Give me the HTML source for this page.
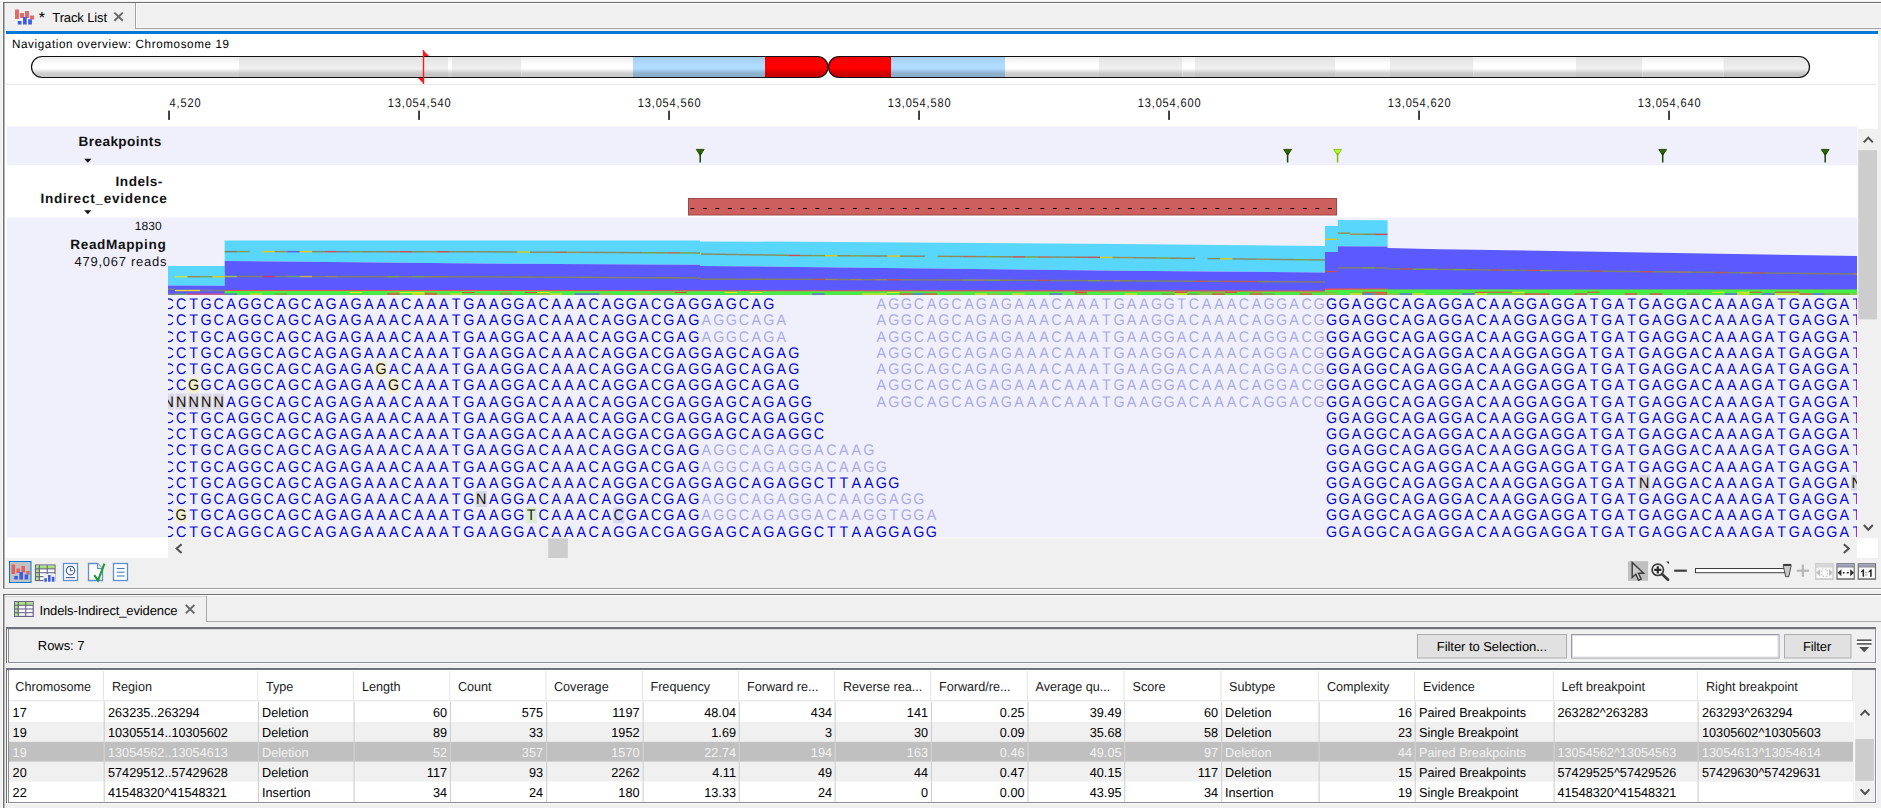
<!DOCTYPE html>
<html lang="en">
<head>
<meta charset="utf-8">
<title>Track List</title>
<style>
html,body{margin:0;padding:0;background:#f0f0f0;overflow:hidden;}
body{width:1881px;height:808px;font-family:"Liberation Sans", sans-serif;}
svg{display:block;font-family:"Liberation Sans", sans-serif;}
svg text{white-space:pre;text-rendering:geometricPrecision;}
</style>
</head>
<body>
<svg width="1881" height="808" viewBox="0 0 1881 808">
<rect x="0" y="0" width="1881" height="808" fill="#f0f0f0" />
<defs>
<linearGradient id="gW" x1="0" y1="0" x2="0" y2="1"><stop offset="0.045" stop-color="rgb(236,236,236)"/><stop offset="0.377" stop-color="rgb(255,255,255)"/><stop offset="0.573" stop-color="rgb(255,255,255)"/><stop offset="0.75" stop-color="rgb(214,214,214)"/><stop offset="0.83" stop-color="rgb(204,204,204)"/><stop offset="1" stop-color="rgb(204,204,204)"/></linearGradient>
<linearGradient id="gG" x1="0" y1="0" x2="0" y2="1"><stop offset="0.045" stop-color="rgb(226,226,226)"/><stop offset="0.377" stop-color="rgb(235,235,235)"/><stop offset="0.573" stop-color="rgb(240,240,240)"/><stop offset="0.75" stop-color="rgb(207,207,207)"/><stop offset="0.83" stop-color="rgb(196,196,196)"/><stop offset="1" stop-color="rgb(196,196,196)"/></linearGradient>
<linearGradient id="gB" x1="0" y1="0" x2="0" y2="1"><stop offset="0.045" stop-color="rgb(162,203,236)"/><stop offset="0.377" stop-color="rgb(176,220,255)"/><stop offset="0.573" stop-color="rgb(176,220,255)"/><stop offset="0.75" stop-color="rgb(147,184,214)"/><stop offset="0.83" stop-color="rgb(140,176,204)"/><stop offset="1" stop-color="rgb(140,176,204)"/></linearGradient>
<linearGradient id="gR" x1="0" y1="0" x2="0" y2="1"><stop offset="0.045" stop-color="rgb(236,0,0)"/><stop offset="0.377" stop-color="rgb(255,0,0)"/><stop offset="0.573" stop-color="rgb(255,0,0)"/><stop offset="0.75" stop-color="rgb(214,0,0)"/><stop offset="0.83" stop-color="rgb(204,0,0)"/><stop offset="1" stop-color="rgb(204,0,0)"/></linearGradient>
<clipPath id="chrL"><rect x="31.5" y="56.5" width="796.5" height="21" rx="10.5" ry="10.5"/></clipPath>
<clipPath id="chrR"><rect x="828.5" y="56.5" width="981" height="21" rx="10.5" ry="10.5"/></clipPath>
</defs>
<rect x="0" y="0" width="1881" height="1" fill="#fafafa" />
<rect x="2" y="2" width="1" height="588" fill="#fafafa" />
<rect x="3" y="2" width="1878" height="1" fill="#707070" />
<rect x="3" y="2" width="1" height="587" fill="#707070" />
<rect x="4" y="3" width="1" height="586" fill="#b8b8b8" />
<rect x="3" y="588" width="1878" height="1" fill="#a0a0a0" />
<rect x="4" y="589" width="1877" height="1" fill="#ffffff" />
<rect x="5" y="34" width="1873" height="524" fill="#ffffff" />
<rect x="136" y="3" width="1745" height="1" fill="#fbfbfb" />
<rect x="136" y="3" width="1" height="25" fill="#fbfbfb" />
<rect x="136" y="27" width="1745" height="1" fill="#f8f8f8" />
<rect x="135" y="28" width="1746" height="1" fill="#a2a2a2" />
<rect x="135" y="3" width="1" height="26" fill="#a2a2a2" />
<rect x="6" y="30" width="1872" height="1" fill="#f6f1ec" />
<rect x="6" y="31" width="1872" height="3" fill="#0078d7" />
<rect x="15" y="9.5" width="4" height="9.5" fill="#e05a5a" opacity="0.9"/>
<rect x="20" y="13" width="4" height="5" fill="#e05a5a" opacity="0.9"/>
<rect x="25" y="11" width="4" height="7" fill="#e05a5a" opacity="0.9"/>
<rect x="30" y="15.5" width="4" height="4" fill="#e05a5a" opacity="0.9"/>
<rect x="17.8" y="21" width="3.7" height="3.5" fill="#3c5ce6" />
<rect x="23" y="17" width="3.7" height="7.5" fill="#3c5ce6" />
<rect x="28.2" y="19.3" width="3.7" height="5.2" fill="#3c5ce6" />
<text x="38.8" y="23" font-size="16" fill="#000" >*</text>
<text x="52.3" y="21.5" font-size="13" fill="#000" textLength="54.7" lengthAdjust="spacing" >Track List</text>
<path d="M114.4 12.6 L122.8 20.8 M122.8 12.6 L114.4 20.8" stroke="#6a6a6a" stroke-width="2" fill="none"/>
<text transform="translate(12,47.9) scale(0.97,1)" x="0" y="0" font-size="12" fill="#000" textLength="223.71" lengthAdjust="spacing" >Navigation overview: Chromosome 19</text>
<g clip-path="url(#chrL)">
<rect x="31" y="56" width="208" height="22" fill="url(#gW)" />
<rect x="239" y="56" width="209" height="22" fill="url(#gG)" />
<rect x="448" y="56" width="4" height="22" fill="url(#gW)" />
<rect x="452" y="56" width="69.5" height="22" fill="url(#gG)" />
<rect x="521.5" y="56" width="111.5" height="22" fill="url(#gW)" />
<rect x="633" y="56" width="132" height="22" fill="url(#gB)" />
<rect x="765" y="56" width="63" height="22" fill="url(#gR)" />
</g>
<g clip-path="url(#chrR)">
<rect x="828" y="56" width="63" height="22" fill="url(#gR)" />
<rect x="891" y="56" width="114" height="22" fill="url(#gB)" />
<rect x="1005" y="56" width="94" height="22" fill="url(#gW)" />
<rect x="1099" y="56" width="83.5" height="22" fill="url(#gG)" />
<rect x="1182.5" y="56" width="12.5" height="22" fill="url(#gW)" />
<rect x="1195" y="56" width="140" height="22" fill="url(#gG)" />
<rect x="1335" y="56" width="55" height="22" fill="url(#gW)" />
<rect x="1390" y="56" width="83.5" height="22" fill="url(#gG)" />
<rect x="1473.5" y="56" width="102.5" height="22" fill="url(#gW)" />
<rect x="1576" y="56" width="66.5" height="22" fill="url(#gG)" />
<rect x="1642.5" y="56" width="81.0" height="22" fill="url(#gW)" />
<rect x="1723.5" y="56" width="86.5" height="22" fill="url(#gG)" />
</g>
<rect x="31.5" y="56.5" width="796.5" height="21" rx="10.5" ry="10.5" fill="none" stroke="#111" stroke-width="1.2"/>
<rect x="828.5" y="56.5" width="981" height="21" rx="10.5" ry="10.5" fill="none" stroke="#111" stroke-width="1.2"/>
<path d="M423.5 50 L423.5 84" stroke="#ff1a1a" stroke-width="1.4" fill="none"/>
<path d="M423 50 L429 56 L423 56 Z" fill="#ff1a1a"/>
<path d="M424 78 L424 84 L418 78 Z" fill="#ff1a1a"/>
<rect x="6" y="84" width="1870" height="1" fill="#e6e6e6" />
<rect x="168.1" y="110.6" width="1.9" height="9.3" fill="#3a3a3a" />
<text transform="translate(169.5,107) scale(0.88,1)" x="0" y="0" font-size="12.5" fill="#111" textLength="35.45" lengthAdjust="spacing" >4,520</text>
<rect x="418.1" y="110.6" width="1.9" height="9.3" fill="#3a3a3a" />
<text transform="translate(387.8,107) scale(0.88,1)" x="0" y="0" font-size="12.5" fill="#111" textLength="71.25" lengthAdjust="spacing" >13,054,540</text>
<rect x="668.1" y="110.6" width="1.9" height="9.3" fill="#3a3a3a" />
<text transform="translate(637.8,107) scale(0.88,1)" x="0" y="0" font-size="12.5" fill="#111" textLength="71.25" lengthAdjust="spacing" >13,054,560</text>
<rect x="918.1" y="110.6" width="1.9" height="9.3" fill="#3a3a3a" />
<text transform="translate(887.8,107) scale(0.88,1)" x="0" y="0" font-size="12.5" fill="#111" textLength="71.25" lengthAdjust="spacing" >13,054,580</text>
<rect x="1168.1" y="110.6" width="1.9" height="9.3" fill="#3a3a3a" />
<text transform="translate(1137.8,107) scale(0.88,1)" x="0" y="0" font-size="12.5" fill="#111" textLength="71.25" lengthAdjust="spacing" >13,054,600</text>
<rect x="1418.1" y="110.6" width="1.9" height="9.3" fill="#3a3a3a" />
<text transform="translate(1387.8,107) scale(0.88,1)" x="0" y="0" font-size="12.5" fill="#111" textLength="71.25" lengthAdjust="spacing" >13,054,620</text>
<rect x="1668.1" y="110.6" width="1.9" height="9.3" fill="#3a3a3a" />
<text transform="translate(1637.8,107) scale(0.88,1)" x="0" y="0" font-size="12.5" fill="#111" textLength="71.25" lengthAdjust="spacing" >13,054,640</text>
<rect x="7" y="126.5" width="1850" height="38.5" fill="#f0f0fc" />
<rect x="7" y="217.5" width="1850" height="320" fill="#f0f0fc" />
<text x="78.5" y="146" font-size="13.6" fill="#111" font-weight="bold" textLength="82.7" lengthAdjust="spacing" >Breakpoints</text>
<path d="M84.2 158.8 L91.4 158.8 L87.8 162.8 Z" fill="#111"/>
<text x="115.6" y="185.7" font-size="13.6" fill="#111" font-weight="bold" textLength="46.7" lengthAdjust="spacing" >Indels-</text>
<text x="40.6" y="202.7" font-size="13.6" fill="#111" font-weight="bold" textLength="126.2" lengthAdjust="spacing" >Indirect_evidence</text>
<path d="M84.2 210.2 L91.4 210.2 L87.8 214.2 Z" fill="#111"/>
<text x="134.7" y="229.8" font-size="12" fill="#111" textLength="27" lengthAdjust="spacing" >1830</text>
<text x="70.3" y="249" font-size="13.6" fill="#111" font-weight="bold" textLength="95.4" lengthAdjust="spacing" >ReadMapping</text>
<text x="74.6" y="265.7" font-size="13" fill="#111" textLength="91.9" lengthAdjust="spacing" >479,067 reads</text>
<clipPath id="trk"><rect x="168" y="126" width="1689" height="411.5"/></clipPath>
<g clip-path="url(#trk)" text-rendering="geometricPrecision">
<path d="M696.3000000000001 149.4 L704.1 149.4 L700.2 155.4 Z" fill="#2c6600" stroke="#1c4200" stroke-width="0.9" stroke-linejoin="round"/>
<path d="M700.2 153 L700.2 162.6" stroke="#1c4200" stroke-width="1.5" fill="none"/>
<path d="M1283.6999999999998 149.4 L1291.5 149.4 L1287.6 155.4 Z" fill="#2c6600" stroke="#1c4200" stroke-width="0.9" stroke-linejoin="round"/>
<path d="M1287.6 153 L1287.6 162.6" stroke="#1c4200" stroke-width="1.5" fill="none"/>
<path d="M1333.6999999999998 149.4 L1341.5 149.4 L1337.6 155.4 Z" fill="#a8ff22" stroke="#86bc00" stroke-width="0.9" stroke-linejoin="round"/>
<path d="M1337.6 153 L1337.6 162.6" stroke="#86bc00" stroke-width="1.5" fill="none"/>
<path d="M1658.8 149.4 L1666.6000000000001 149.4 L1662.7 155.4 Z" fill="#2c6600" stroke="#1c4200" stroke-width="0.9" stroke-linejoin="round"/>
<path d="M1662.7 153 L1662.7 162.6" stroke="#1c4200" stroke-width="1.5" fill="none"/>
<path d="M1821.3 149.4 L1829.1000000000001 149.4 L1825.2 155.4 Z" fill="#2c6600" stroke="#1c4200" stroke-width="0.9" stroke-linejoin="round"/>
<path d="M1825.2 153 L1825.2 162.6" stroke="#1c4200" stroke-width="1.5" fill="none"/>
<rect x="688.5" y="198.5" width="648" height="16.5" fill="#cd5f5f" stroke="#9c4a4a" stroke-width="1" />
<path d="M690.4 208.5 H1336" stroke="#0a0a14" stroke-width="1.2" stroke-dasharray="3.9 8.6" fill="none"/>
<polygon points="168,265.9 224.7,265.9 224.7,240.6 700,240.4 700,241.5 800,241.7 1120,243.9 1325,246 1325,226 1337.8,226 1337.8,220.1 1387.6,220.3 1387.6,246.5 1387.6,246.5 1337.8,246.3 1337.8,252 1325,252 1325,272.5 1120,270.8 800,266.9 700,266 700,264.8 480,263.5 224.7,261 224.7,285.8 168,285.6" fill="#58d6fb"/>
<polygon points="168,285.6 224.7,285.8 224.7,261 480,263.5 700,264.8 700,266 800,266.9 1120,270.8 1325,272.5 1325,252 1337.8,252 1337.8,246.3 1387.6,246.5 1387.61,248 1440,249.2 1857,256 1857,294.7 168,294.7" fill="#5a5afe"/>
<polygon points="168,293.6 175,293.6 175,294.7 168,294.7" fill="#808080"/>
<polygon points="175,293.6 187.5,293.6 187.5,294.7 175,294.7" fill="#70b040"/>
<polygon points="187.5,293.6 224.7,293.6 224.7,294.7 187.5,294.7" fill="#e85060"/>
<polygon points="224.7,290 1325,290.4 1325,288.6 1387.6,288.4 1387.6,289.8 1857,289.8 1857,294.7 224.7,294.7" fill="#f05050"/>
<polygon points="224.7,291 800,291.2 1325,291.8 1325,290 1387.6,289.6 1857,289.6 1857,294.7 224.7,294.7" fill="#46ee46"/>
<rect x="175.0" y="275.97" width="12.5" height="1.45" fill="#c8e040"/>
<rect x="187.5" y="275.97" width="12.5" height="1.45" fill="#a08858"/>
<rect x="200.0" y="275.97" width="12.5" height="1.45" fill="#80a050"/>
<rect x="212.5" y="275.97" width="12.5" height="1.45" fill="#e8c820"/>
<rect x="224.7" y="250.88" width="12.5" height="1.45" fill="#808060"/>
<rect x="237.2" y="250.89" width="12.5" height="1.45" fill="#80a050"/>
<rect x="262.2" y="250.91" width="12.5" height="1.45" fill="#e8c820"/>
<rect x="274.7" y="250.92" width="12.5" height="1.45" fill="#a09050"/>
<rect x="287.2" y="250.93" width="12.5" height="1.45" fill="#6060e0"/>
<rect x="299.7" y="250.94" width="12.5" height="1.45" fill="#e8c820"/>
<rect x="312.2" y="250.95" width="12.5" height="1.45" fill="#8a8a60"/>
<rect x="324.7" y="250.96" width="12.5" height="1.45" fill="#d05050"/>
<rect x="337.2" y="250.97" width="12.5" height="1.45" fill="#708090"/>
<rect x="349.7" y="250.98" width="12.5" height="1.45" fill="#80a050"/>
<rect x="362.2" y="250.99" width="12.5" height="1.45" fill="#8a8a60"/>
<rect x="374.7" y="251.00" width="12.5" height="1.45" fill="#8a8a60"/>
<rect x="387.2" y="251.01" width="12.5" height="1.45" fill="#b07050"/>
<rect x="399.7" y="251.02" width="12.5" height="1.45" fill="#c85050"/>
<rect x="412.2" y="251.03" width="12.5" height="1.45" fill="#8a8a60"/>
<rect x="424.7" y="251.04" width="12.5" height="1.45" fill="#a09050"/>
<rect x="437.2" y="251.05" width="12.5" height="1.45" fill="#c85050"/>
<rect x="449.7" y="251.06" width="12.5" height="1.45" fill="#8a8a60"/>
<rect x="462.2" y="251.07" width="12.5" height="1.45" fill="#8a8a60"/>
<rect x="474.7" y="251.07" width="5.3" height="1.45" fill="#909048"/>
<rect x="480.0" y="251.11" width="12.5" height="1.45" fill="#8a8a60"/>
<rect x="492.5" y="251.18" width="12.5" height="1.45" fill="#8a8a60"/>
<rect x="505.0" y="251.25" width="12.5" height="1.45" fill="#909048"/>
<rect x="517.5" y="251.31" width="12.5" height="1.45" fill="#d8c820"/>
<rect x="530.0" y="251.38" width="12.5" height="1.45" fill="#8a8a60"/>
<rect x="542.5" y="251.45" width="12.5" height="1.45" fill="#8a8a60"/>
<rect x="555.0" y="251.52" width="12.5" height="1.45" fill="#b07050"/>
<rect x="567.5" y="251.59" width="12.5" height="1.45" fill="#a09050"/>
<rect x="580.0" y="251.65" width="12.5" height="1.45" fill="#8a8a60"/>
<rect x="592.5" y="251.72" width="12.5" height="1.45" fill="#8a8a60"/>
<rect x="605.0" y="251.79" width="12.5" height="1.45" fill="#8a8a60"/>
<rect x="617.5" y="251.86" width="12.5" height="1.45" fill="#8a8a60"/>
<rect x="630.0" y="251.93" width="12.5" height="1.45" fill="#8a8a60"/>
<rect x="642.5" y="252.00" width="12.5" height="1.45" fill="#80a040"/>
<rect x="655.0" y="252.06" width="12.5" height="1.45" fill="#909048"/>
<rect x="667.5" y="252.13" width="12.5" height="1.45" fill="#b07050"/>
<rect x="680.0" y="252.20" width="12.5" height="1.45" fill="#80a040"/>
<rect x="692.5" y="252.25" width="7.5" height="1.45" fill="#909048"/>
<rect x="700.0" y="252.78" width="1.0" height="1.45" fill="#d8c820"/>
<rect x="701.0" y="253.37" width="12.5" height="1.45" fill="#8a8a60"/>
<rect x="713.5" y="253.56" width="12.5" height="1.45" fill="#8a8a60"/>
<rect x="726.0" y="253.75" width="12.5" height="1.45" fill="#8a8a60"/>
<rect x="738.5" y="253.94" width="12.5" height="1.45" fill="#8a8a60"/>
<rect x="751.0" y="254.13" width="12.5" height="1.45" fill="#8a8a60"/>
<rect x="763.5" y="254.32" width="12.5" height="1.45" fill="#8a8a60"/>
<rect x="776.0" y="254.51" width="12.5" height="1.45" fill="#909048"/>
<rect x="788.5" y="254.69" width="11.5" height="1.45" fill="#c85050"/>
<rect x="800.0" y="254.81" width="12.5" height="1.45" fill="#8a8a60"/>
<rect x="812.5" y="254.89" width="12.5" height="1.45" fill="#80a040"/>
<rect x="825.0" y="254.97" width="12.5" height="1.45" fill="#d8c820"/>
<rect x="837.5" y="255.05" width="12.5" height="1.45" fill="#8a8a60"/>
<rect x="850.0" y="255.13" width="12.5" height="1.45" fill="#80a040"/>
<rect x="862.5" y="255.20" width="12.5" height="1.45" fill="#8a8a60"/>
<rect x="875.0" y="255.28" width="12.5" height="1.45" fill="#8a8a60"/>
<rect x="887.5" y="255.36" width="12.5" height="1.45" fill="#d8c820"/>
<rect x="900.0" y="255.44" width="12.5" height="1.45" fill="#8a8a60"/>
<rect x="912.5" y="255.52" width="12.5" height="1.45" fill="#8a8a60"/>
<rect x="937.5" y="255.67" width="12.5" height="1.45" fill="#909048"/>
<rect x="950.0" y="255.75" width="12.5" height="1.45" fill="#8a8a60"/>
<rect x="962.5" y="255.83" width="12.5" height="1.45" fill="#b07050"/>
<rect x="975.0" y="255.91" width="12.5" height="1.45" fill="#8a8a60"/>
<rect x="987.5" y="255.99" width="12.5" height="1.45" fill="#80a040"/>
<rect x="1000.0" y="256.06" width="12.5" height="1.45" fill="#8a8a60"/>
<rect x="1012.5" y="256.14" width="12.5" height="1.45" fill="#c85050"/>
<rect x="1025.0" y="256.22" width="12.5" height="1.45" fill="#80a040"/>
<rect x="1037.5" y="256.30" width="12.5" height="1.45" fill="#b07050"/>
<rect x="1050.0" y="256.38" width="12.5" height="1.45" fill="#8a8a60"/>
<rect x="1062.5" y="256.45" width="12.5" height="1.45" fill="#8a8a60"/>
<rect x="1075.0" y="256.53" width="12.5" height="1.45" fill="#b07050"/>
<rect x="1087.5" y="256.61" width="12.5" height="1.45" fill="#c85050"/>
<rect x="1100.0" y="256.69" width="12.5" height="1.45" fill="#d8c820"/>
<rect x="1112.5" y="256.75" width="7.5" height="1.45" fill="#909048"/>
<rect x="1120.0" y="256.85" width="12.5" height="1.45" fill="#a09050"/>
<rect x="1132.5" y="257.00" width="12.5" height="1.45" fill="#8a8a60"/>
<rect x="1145.0" y="257.16" width="12.5" height="1.45" fill="#8a8a60"/>
<rect x="1157.5" y="257.31" width="12.5" height="1.45" fill="#80a040"/>
<rect x="1170.0" y="257.46" width="12.5" height="1.45" fill="#8a8a60"/>
<rect x="1182.5" y="257.61" width="12.5" height="1.45" fill="#8a8a60"/>
<rect x="1207.5" y="257.92" width="12.5" height="1.45" fill="#8a8a60"/>
<rect x="1220.0" y="258.07" width="12.5" height="1.45" fill="#d8c820"/>
<rect x="1232.5" y="258.22" width="12.5" height="1.45" fill="#8a8a60"/>
<rect x="1245.0" y="258.38" width="12.5" height="1.45" fill="#8a8a60"/>
<rect x="1257.5" y="258.53" width="12.5" height="1.45" fill="#a09050"/>
<rect x="1270.0" y="258.68" width="12.5" height="1.45" fill="#8a8a60"/>
<rect x="1282.5" y="258.83" width="12.5" height="1.45" fill="#8a8a60"/>
<rect x="1295.0" y="258.99" width="12.5" height="1.45" fill="#80a040"/>
<rect x="1307.5" y="259.14" width="12.5" height="1.45" fill="#8a8a60"/>
<rect x="1320.0" y="259.24" width="5.0" height="1.45" fill="#8a8a60"/>
<rect x="1325.0" y="238.58" width="12.5" height="1.45" fill="#d8c820"/>
<rect x="1337.5" y="238.58" width="0.3" height="1.45" fill="#8a8a60"/>
<rect x="1337.8" y="232.38" width="12.2" height="1.45" fill="#909048"/>
<rect x="1350.0" y="232.97" width="0.1" height="1.45" fill="#a09050"/>
<rect x="1350.1" y="233.51" width="12.5" height="1.45" fill="#a09050"/>
<rect x="1362.6" y="233.58" width="12.5" height="1.45" fill="#8a8a60"/>
<rect x="1375.1" y="233.64" width="12.5" height="1.45" fill="#c85050"/>
<rect x="168.0" y="288.47" width="7.0" height="1.45" fill="#80808a"/>
<rect x="175.0" y="289.77" width="12.5" height="1.45" fill="#e8e020"/>
<rect x="187.5" y="289.77" width="12.5" height="1.45" fill="#e8e020"/>
<rect x="200.0" y="289.77" width="12.5" height="1.45" fill="#80808a"/>
<rect x="212.5" y="289.77" width="12.5" height="1.45" fill="#808070"/>
<rect x="224.7" y="275.78" width="12.5" height="1.45" fill="#a0c040"/>
<rect x="237.2" y="275.80" width="12.5" height="1.45" fill="#80806a"/>
<rect x="249.7" y="275.81" width="12.5" height="1.45" fill="#80806a"/>
<rect x="262.2" y="275.83" width="12.5" height="1.45" fill="#c04060"/>
<rect x="274.7" y="275.84" width="12.5" height="1.45" fill="#80806a"/>
<rect x="287.2" y="275.86" width="12.5" height="1.45" fill="#70a060"/>
<rect x="299.7" y="275.87" width="12.5" height="1.45" fill="#c0b050"/>
<rect x="312.2" y="275.89" width="12.5" height="1.45" fill="#80806a"/>
<rect x="324.7" y="275.90" width="12.5" height="1.45" fill="#98885a"/>
<rect x="337.2" y="275.91" width="12.5" height="1.45" fill="#80806a"/>
<rect x="349.7" y="275.93" width="12.5" height="1.45" fill="#80806a"/>
<rect x="362.2" y="275.94" width="12.5" height="1.45" fill="#80806a"/>
<rect x="374.7" y="275.96" width="12.5" height="1.45" fill="#80806a"/>
<rect x="387.2" y="275.97" width="12.5" height="1.45" fill="#80a040"/>
<rect x="399.7" y="275.99" width="12.5" height="1.45" fill="#80806a"/>
<rect x="412.2" y="276.00" width="12.5" height="1.45" fill="#80a040"/>
<rect x="424.7" y="276.02" width="12.5" height="1.45" fill="#88884a"/>
<rect x="437.2" y="276.03" width="12.5" height="1.45" fill="#88884a"/>
<rect x="449.7" y="276.05" width="12.5" height="1.45" fill="#80806a"/>
<rect x="462.2" y="276.06" width="12.5" height="1.45" fill="#80806a"/>
<rect x="474.7" y="276.07" width="5.3" height="1.45" fill="#80806a"/>
<rect x="480.0" y="276.11" width="12.5" height="1.45" fill="#80806a"/>
<rect x="492.5" y="276.18" width="12.5" height="1.45" fill="#80806a"/>
<rect x="505.0" y="276.25" width="12.5" height="1.45" fill="#80806a"/>
<rect x="517.5" y="276.31" width="12.5" height="1.45" fill="#88884a"/>
<rect x="530.0" y="276.38" width="12.5" height="1.45" fill="#80806a"/>
<rect x="542.5" y="276.45" width="12.5" height="1.45" fill="#80806a"/>
<rect x="555.0" y="276.52" width="12.5" height="1.45" fill="#80806a"/>
<rect x="567.5" y="276.59" width="12.5" height="1.45" fill="#80806a"/>
<rect x="580.0" y="276.65" width="12.5" height="1.45" fill="#88884a"/>
<rect x="592.5" y="276.72" width="12.5" height="1.45" fill="#80806a"/>
<rect x="605.0" y="276.79" width="12.5" height="1.45" fill="#80806a"/>
<rect x="617.5" y="276.86" width="12.5" height="1.45" fill="#80806a"/>
<rect x="630.0" y="276.93" width="12.5" height="1.45" fill="#80806a"/>
<rect x="642.5" y="277.00" width="12.5" height="1.45" fill="#80806a"/>
<rect x="655.0" y="277.06" width="12.5" height="1.45" fill="#88884a"/>
<rect x="667.5" y="277.13" width="12.5" height="1.45" fill="#88884a"/>
<rect x="680.0" y="277.20" width="12.5" height="1.45" fill="#80806a"/>
<rect x="692.5" y="277.25" width="7.5" height="1.45" fill="#80806a"/>
<rect x="700.0" y="277.88" width="1.0" height="1.45" fill="#b06050"/>
<rect x="701.0" y="278.48" width="12.5" height="1.45" fill="#80806a"/>
<rect x="713.5" y="278.49" width="12.5" height="1.45" fill="#80806a"/>
<rect x="726.0" y="278.51" width="12.5" height="1.45" fill="#80806a"/>
<rect x="738.5" y="278.52" width="12.5" height="1.45" fill="#80806a"/>
<rect x="751.0" y="278.53" width="12.5" height="1.45" fill="#88884a"/>
<rect x="763.5" y="278.54" width="12.5" height="1.45" fill="#80806a"/>
<rect x="776.0" y="278.56" width="12.5" height="1.45" fill="#80806a"/>
<rect x="788.5" y="278.57" width="11.5" height="1.45" fill="#80806a"/>
<rect x="800.0" y="278.60" width="12.5" height="1.45" fill="#80806a"/>
<rect x="812.5" y="278.66" width="12.5" height="1.45" fill="#b06050"/>
<rect x="825.0" y="278.72" width="12.5" height="1.45" fill="#98885a"/>
<rect x="837.5" y="278.78" width="12.5" height="1.45" fill="#80806a"/>
<rect x="850.0" y="278.84" width="12.5" height="1.45" fill="#98885a"/>
<rect x="862.5" y="278.90" width="12.5" height="1.45" fill="#80806a"/>
<rect x="875.0" y="278.96" width="12.5" height="1.45" fill="#98885a"/>
<rect x="887.5" y="279.01" width="12.5" height="1.45" fill="#b06050"/>
<rect x="900.0" y="279.07" width="12.5" height="1.45" fill="#80806a"/>
<rect x="912.5" y="279.13" width="12.5" height="1.45" fill="#80806a"/>
<rect x="925.0" y="279.19" width="12.5" height="1.45" fill="#80806a"/>
<rect x="937.5" y="279.25" width="12.5" height="1.45" fill="#88884a"/>
<rect x="950.0" y="279.31" width="12.5" height="1.45" fill="#80806a"/>
<rect x="962.5" y="279.37" width="12.5" height="1.45" fill="#80a040"/>
<rect x="975.0" y="279.42" width="12.5" height="1.45" fill="#98885a"/>
<rect x="987.5" y="279.48" width="12.5" height="1.45" fill="#80a040"/>
<rect x="1000.0" y="279.54" width="12.5" height="1.45" fill="#88884a"/>
<rect x="1012.5" y="279.60" width="12.5" height="1.45" fill="#80806a"/>
<rect x="1025.0" y="279.66" width="12.5" height="1.45" fill="#80806a"/>
<rect x="1037.5" y="279.72" width="12.5" height="1.45" fill="#b06050"/>
<rect x="1050.0" y="279.78" width="12.5" height="1.45" fill="#80806a"/>
<rect x="1062.5" y="279.83" width="12.5" height="1.45" fill="#80806a"/>
<rect x="1075.0" y="279.89" width="12.5" height="1.45" fill="#80806a"/>
<rect x="1087.5" y="279.95" width="12.5" height="1.45" fill="#80a040"/>
<rect x="1100.0" y="280.01" width="12.5" height="1.45" fill="#80806a"/>
<rect x="1112.5" y="280.06" width="7.5" height="1.45" fill="#98885a"/>
<rect x="1120.0" y="280.11" width="12.5" height="1.45" fill="#88884a"/>
<rect x="1132.5" y="280.18" width="12.5" height="1.45" fill="#80806a"/>
<rect x="1145.0" y="280.26" width="12.5" height="1.45" fill="#80806a"/>
<rect x="1157.5" y="280.33" width="12.5" height="1.45" fill="#80806a"/>
<rect x="1170.0" y="280.40" width="12.5" height="1.45" fill="#80806a"/>
<rect x="1182.5" y="280.48" width="12.5" height="1.45" fill="#80806a"/>
<rect x="1195.0" y="280.55" width="12.5" height="1.45" fill="#b06050"/>
<rect x="1207.5" y="280.62" width="12.5" height="1.45" fill="#80806a"/>
<rect x="1220.0" y="280.70" width="12.5" height="1.45" fill="#b06050"/>
<rect x="1232.5" y="280.77" width="12.5" height="1.45" fill="#b06050"/>
<rect x="1245.0" y="280.84" width="12.5" height="1.45" fill="#b06050"/>
<rect x="1257.5" y="280.92" width="12.5" height="1.45" fill="#88884a"/>
<rect x="1270.0" y="280.99" width="12.5" height="1.45" fill="#80806a"/>
<rect x="1282.5" y="281.06" width="12.5" height="1.45" fill="#80806a"/>
<rect x="1295.0" y="281.14" width="12.5" height="1.45" fill="#80806a"/>
<rect x="1307.5" y="281.21" width="12.5" height="1.45" fill="#80806a"/>
<rect x="1320.0" y="281.26" width="5.0" height="1.45" fill="#80806a"/>
<rect x="1325.0" y="270.77" width="12.5" height="1.45" fill="#c05060"/>
<rect x="1337.5" y="270.77" width="0.3" height="1.45" fill="#c05060"/>
<rect x="1337.8" y="267.17" width="12.5" height="1.45" fill="#80806a"/>
<rect x="1350.3" y="267.17" width="12.5" height="1.45" fill="#80806a"/>
<rect x="1362.8" y="267.17" width="12.5" height="1.45" fill="#80a040"/>
<rect x="1375.3" y="267.17" width="12.3" height="1.45" fill="#80806a"/>
<rect x="1387.6" y="268.15" width="12.5" height="1.45" fill="#80806a"/>
<rect x="1400.1" y="268.29" width="12.5" height="1.45" fill="#b06050"/>
<rect x="1412.6" y="268.43" width="12.5" height="1.45" fill="#80a040"/>
<rect x="1425.1" y="268.58" width="12.5" height="1.45" fill="#80a040"/>
<rect x="1437.6" y="268.66" width="2.4" height="1.45" fill="#80806a"/>
<rect x="1440.0" y="268.74" width="12.5" height="1.45" fill="#80806a"/>
<rect x="1452.5" y="268.88" width="12.5" height="1.45" fill="#80a040"/>
<rect x="1465.0" y="269.02" width="12.5" height="1.45" fill="#88884a"/>
<rect x="1477.5" y="269.16" width="12.5" height="1.45" fill="#80806a"/>
<rect x="1490.0" y="269.30" width="12.5" height="1.45" fill="#b06050"/>
<rect x="1502.5" y="269.43" width="12.5" height="1.45" fill="#88884a"/>
<rect x="1515.0" y="269.57" width="12.5" height="1.45" fill="#80806a"/>
<rect x="1527.5" y="269.71" width="12.5" height="1.45" fill="#b06050"/>
<rect x="1540.0" y="269.85" width="12.5" height="1.45" fill="#80a040"/>
<rect x="1552.5" y="269.98" width="12.5" height="1.45" fill="#80806a"/>
<rect x="1565.0" y="270.12" width="12.5" height="1.45" fill="#80806a"/>
<rect x="1577.5" y="270.26" width="12.5" height="1.45" fill="#80806a"/>
<rect x="1590.0" y="270.40" width="12.5" height="1.45" fill="#b06050"/>
<rect x="1602.5" y="270.54" width="12.5" height="1.45" fill="#80806a"/>
<rect x="1615.0" y="270.67" width="12.5" height="1.45" fill="#80806a"/>
<rect x="1627.5" y="270.81" width="12.5" height="1.45" fill="#80806a"/>
<rect x="1640.0" y="270.95" width="12.5" height="1.45" fill="#b06050"/>
<rect x="1652.5" y="271.09" width="12.5" height="1.45" fill="#80806a"/>
<rect x="1665.0" y="271.23" width="12.5" height="1.45" fill="#88884a"/>
<rect x="1677.5" y="271.36" width="12.5" height="1.45" fill="#98885a"/>
<rect x="1690.0" y="271.50" width="12.5" height="1.45" fill="#80806a"/>
<rect x="1702.5" y="271.64" width="12.5" height="1.45" fill="#80806a"/>
<rect x="1715.0" y="271.78" width="12.5" height="1.45" fill="#b06050"/>
<rect x="1727.5" y="271.92" width="12.5" height="1.45" fill="#80806a"/>
<rect x="1740.0" y="272.05" width="12.5" height="1.45" fill="#98885a"/>
<rect x="1752.5" y="272.19" width="12.5" height="1.45" fill="#b06050"/>
<rect x="1765.0" y="272.33" width="12.5" height="1.45" fill="#80806a"/>
<rect x="1777.5" y="272.47" width="12.5" height="1.45" fill="#80806a"/>
<rect x="1790.0" y="272.60" width="12.5" height="1.45" fill="#80806a"/>
<rect x="1802.5" y="272.74" width="12.5" height="1.45" fill="#80806a"/>
<rect x="1815.0" y="272.88" width="12.5" height="1.45" fill="#80806a"/>
<rect x="1827.5" y="273.02" width="12.5" height="1.45" fill="#80806a"/>
<rect x="1840.0" y="273.16" width="12.5" height="1.45" fill="#80806a"/>
<rect x="1852.5" y="273.25" width="4.5" height="1.45" fill="#98885a"/>
<rect x="224.7" y="293.40" width="12.5" height="1.2" fill="#5a5afe"/>
<rect x="237.2" y="293.40" width="12.5" height="1.2" fill="#46ee46"/>
<rect x="249.7" y="293.40" width="12.5" height="1.2" fill="#e8e820"/>
<rect x="262.2" y="293.40" width="12.5" height="1.2" fill="#46ee46"/>
<rect x="274.7" y="293.40" width="12.5" height="1.2" fill="#80a040"/>
<rect x="287.2" y="293.40" width="12.5" height="1.2" fill="#46ee46"/>
<rect x="299.7" y="293.40" width="12.5" height="1.2" fill="#46ee46"/>
<rect x="312.2" y="293.40" width="12.5" height="1.2" fill="#46ee46"/>
<rect x="324.7" y="293.40" width="12.5" height="1.2" fill="#46ee46"/>
<rect x="337.2" y="293.40" width="12.5" height="1.2" fill="#46ee46"/>
<rect x="349.7" y="293.40" width="12.5" height="1.2" fill="#46ee46"/>
<rect x="362.2" y="293.40" width="12.5" height="1.2" fill="#46ee46"/>
<rect x="374.7" y="293.40" width="12.5" height="1.2" fill="#46ee46"/>
<rect x="387.2" y="293.40" width="12.5" height="1.2" fill="#f04040"/>
<rect x="399.7" y="293.40" width="12.5" height="1.2" fill="#46ee46"/>
<rect x="412.2" y="293.40" width="12.5" height="1.2" fill="#e8e820"/>
<rect x="424.7" y="293.40" width="12.5" height="1.2" fill="#f04040"/>
<rect x="437.2" y="293.40" width="12.5" height="1.2" fill="#a0c040"/>
<rect x="449.7" y="293.40" width="12.5" height="1.2" fill="#e8e820"/>
<rect x="462.2" y="293.40" width="12.5" height="1.2" fill="#46ee46"/>
<rect x="474.7" y="293.40" width="12.5" height="1.2" fill="#a0c040"/>
<rect x="487.2" y="293.40" width="12.5" height="1.2" fill="#46ee46"/>
<rect x="499.7" y="293.40" width="12.5" height="1.2" fill="#80a040"/>
<rect x="512.2" y="293.40" width="12.5" height="1.2" fill="#46ee46"/>
<rect x="524.7" y="293.40" width="12.5" height="1.2" fill="#46ee46"/>
<rect x="537.2" y="293.40" width="12.5" height="1.2" fill="#a0c040"/>
<rect x="549.7" y="293.40" width="12.5" height="1.2" fill="#e8e820"/>
<rect x="562.2" y="293.40" width="12.5" height="1.2" fill="#46ee46"/>
<rect x="574.7" y="293.40" width="12.5" height="1.2" fill="#5a5afe"/>
<rect x="587.2" y="293.40" width="12.5" height="1.2" fill="#5a5afe"/>
<rect x="599.7" y="293.40" width="12.5" height="1.2" fill="#a0c040"/>
<rect x="612.2" y="293.40" width="12.5" height="1.2" fill="#46ee46"/>
<rect x="624.7" y="293.40" width="12.5" height="1.2" fill="#46ee46"/>
<rect x="637.2" y="293.40" width="12.5" height="1.2" fill="#a0c040"/>
<rect x="649.7" y="293.40" width="12.5" height="1.2" fill="#46ee46"/>
<rect x="662.2" y="293.40" width="12.5" height="1.2" fill="#46ee46"/>
<rect x="674.7" y="293.40" width="12.5" height="1.2" fill="#46ee46"/>
<rect x="687.2" y="293.40" width="12.5" height="1.2" fill="#46ee46"/>
<rect x="699.7" y="293.40" width="12.5" height="1.2" fill="#46ee46"/>
<rect x="712.2" y="293.40" width="12.5" height="1.2" fill="#46ee46"/>
<rect x="724.7" y="293.40" width="12.5" height="1.2" fill="#46ee46"/>
<rect x="737.2" y="293.40" width="12.5" height="1.2" fill="#46ee46"/>
<rect x="749.7" y="293.40" width="12.5" height="1.2" fill="#46ee46"/>
<rect x="762.2" y="293.40" width="12.5" height="1.2" fill="#46ee46"/>
<rect x="774.7" y="293.40" width="12.5" height="1.2" fill="#46ee46"/>
<rect x="787.2" y="293.40" width="12.5" height="1.2" fill="#46ee46"/>
<rect x="799.7" y="293.40" width="12.5" height="1.2" fill="#46ee46"/>
<rect x="812.2" y="293.40" width="12.5" height="1.2" fill="#5a5afe"/>
<rect x="824.7" y="293.40" width="12.5" height="1.2" fill="#46ee46"/>
<rect x="837.2" y="293.40" width="12.5" height="1.2" fill="#46ee46"/>
<rect x="849.7" y="293.40" width="12.5" height="1.2" fill="#46ee46"/>
<rect x="862.2" y="293.40" width="12.5" height="1.2" fill="#e8e820"/>
<rect x="874.7" y="293.40" width="12.5" height="1.2" fill="#e8e820"/>
<rect x="887.2" y="293.40" width="12.5" height="1.2" fill="#46ee46"/>
<rect x="899.7" y="293.40" width="12.5" height="1.2" fill="#f04040"/>
<rect x="912.2" y="293.40" width="12.5" height="1.2" fill="#5a5afe"/>
<rect x="924.7" y="293.40" width="12.5" height="1.2" fill="#f04040"/>
<rect x="937.2" y="293.40" width="12.5" height="1.2" fill="#46ee46"/>
<rect x="949.7" y="293.40" width="12.5" height="1.2" fill="#a0c040"/>
<rect x="962.2" y="293.40" width="12.5" height="1.2" fill="#46ee46"/>
<rect x="974.7" y="293.40" width="12.5" height="1.2" fill="#e8e820"/>
<rect x="987.2" y="293.40" width="12.5" height="1.2" fill="#a0c040"/>
<rect x="999.7" y="293.40" width="12.5" height="1.2" fill="#46ee46"/>
<rect x="1012.2" y="293.40" width="12.5" height="1.2" fill="#e8e820"/>
<rect x="1024.7" y="293.40" width="12.5" height="1.2" fill="#46ee46"/>
<rect x="1037.2" y="293.40" width="12.5" height="1.2" fill="#46ee46"/>
<rect x="1049.7" y="293.40" width="12.5" height="1.2" fill="#5a5afe"/>
<rect x="1062.2" y="293.40" width="12.5" height="1.2" fill="#46ee46"/>
<rect x="1074.7" y="293.40" width="12.5" height="1.2" fill="#80a040"/>
<rect x="1087.2" y="293.40" width="12.5" height="1.2" fill="#46ee46"/>
<rect x="1099.7" y="293.40" width="12.5" height="1.2" fill="#46ee46"/>
<rect x="1112.2" y="293.40" width="12.5" height="1.2" fill="#46ee46"/>
<rect x="1124.7" y="293.40" width="12.5" height="1.2" fill="#e8e820"/>
<rect x="1137.2" y="293.40" width="12.5" height="1.2" fill="#46ee46"/>
<rect x="1149.7" y="293.40" width="12.5" height="1.2" fill="#46ee46"/>
<rect x="1162.2" y="293.40" width="12.5" height="1.2" fill="#80a040"/>
<rect x="1174.7" y="293.40" width="12.5" height="1.2" fill="#e8e820"/>
<rect x="1187.2" y="293.40" width="12.5" height="1.2" fill="#80a040"/>
<rect x="1199.7" y="293.40" width="12.5" height="1.2" fill="#a0c040"/>
<rect x="1212.2" y="293.40" width="12.5" height="1.2" fill="#f04040"/>
<rect x="1224.7" y="293.40" width="12.5" height="1.2" fill="#46ee46"/>
<rect x="1237.2" y="293.40" width="12.5" height="1.2" fill="#46ee46"/>
<rect x="1249.7" y="293.40" width="12.5" height="1.2" fill="#f04040"/>
<rect x="1262.2" y="293.40" width="12.5" height="1.2" fill="#80a040"/>
<rect x="1274.7" y="293.40" width="12.5" height="1.2" fill="#46ee46"/>
<rect x="1287.2" y="293.40" width="12.5" height="1.2" fill="#46ee46"/>
<rect x="1299.7" y="293.40" width="12.5" height="1.2" fill="#f04040"/>
<rect x="1312.2" y="293.40" width="12.5" height="1.2" fill="#46ee46"/>
<rect x="1324.7" y="293.40" width="12.5" height="1.2" fill="#a0c040"/>
<rect x="1337.2" y="293.40" width="12.5" height="1.2" fill="#46ee46"/>
<rect x="1349.7" y="293.40" width="12.5" height="1.2" fill="#e8e820"/>
<rect x="1362.2" y="293.40" width="12.5" height="1.2" fill="#5a5afe"/>
<rect x="1374.7" y="293.40" width="12.5" height="1.2" fill="#f04040"/>
<rect x="1387.2" y="293.40" width="12.5" height="1.2" fill="#a0c040"/>
<rect x="1399.7" y="293.40" width="12.5" height="1.2" fill="#5a5afe"/>
<rect x="1412.2" y="293.40" width="12.5" height="1.2" fill="#e8e820"/>
<rect x="1424.7" y="293.40" width="12.5" height="1.2" fill="#46ee46"/>
<rect x="1437.2" y="293.40" width="12.5" height="1.2" fill="#46ee46"/>
<rect x="1449.7" y="293.40" width="12.5" height="1.2" fill="#46ee46"/>
<rect x="1462.2" y="293.40" width="12.5" height="1.2" fill="#5a5afe"/>
<rect x="1474.7" y="293.40" width="12.5" height="1.2" fill="#e8e820"/>
<rect x="1487.2" y="293.40" width="12.5" height="1.2" fill="#46ee46"/>
<rect x="1499.7" y="293.40" width="12.5" height="1.2" fill="#46ee46"/>
<rect x="1512.2" y="293.40" width="12.5" height="1.2" fill="#a0c040"/>
<rect x="1524.7" y="293.40" width="12.5" height="1.2" fill="#f04040"/>
<rect x="1537.2" y="293.40" width="12.5" height="1.2" fill="#f04040"/>
<rect x="1549.7" y="293.40" width="12.5" height="1.2" fill="#46ee46"/>
<rect x="1562.2" y="293.40" width="12.5" height="1.2" fill="#46ee46"/>
<rect x="1574.7" y="293.40" width="12.5" height="1.2" fill="#f04040"/>
<rect x="1587.2" y="293.40" width="12.5" height="1.2" fill="#46ee46"/>
<rect x="1599.7" y="293.40" width="12.5" height="1.2" fill="#46ee46"/>
<rect x="1612.2" y="293.40" width="12.5" height="1.2" fill="#46ee46"/>
<rect x="1624.7" y="293.40" width="12.5" height="1.2" fill="#f04040"/>
<rect x="1637.2" y="293.40" width="12.5" height="1.2" fill="#46ee46"/>
<rect x="1649.7" y="293.40" width="12.5" height="1.2" fill="#f04040"/>
<rect x="1662.2" y="293.40" width="12.5" height="1.2" fill="#46ee46"/>
<rect x="1674.7" y="293.40" width="12.5" height="1.2" fill="#46ee46"/>
<rect x="1687.2" y="293.40" width="12.5" height="1.2" fill="#80a040"/>
<rect x="1699.7" y="293.40" width="12.5" height="1.2" fill="#46ee46"/>
<rect x="1712.2" y="293.40" width="12.5" height="1.2" fill="#46ee46"/>
<rect x="1724.7" y="293.40" width="12.5" height="1.2" fill="#5a5afe"/>
<rect x="1737.2" y="293.40" width="12.5" height="1.2" fill="#e8e820"/>
<rect x="1749.7" y="293.40" width="12.5" height="1.2" fill="#46ee46"/>
<rect x="1762.2" y="293.40" width="12.5" height="1.2" fill="#5a5afe"/>
<rect x="1774.7" y="293.40" width="12.5" height="1.2" fill="#e8e820"/>
<rect x="1787.2" y="293.40" width="12.5" height="1.2" fill="#e8e820"/>
<rect x="1799.7" y="293.40" width="12.5" height="1.2" fill="#f04040"/>
<rect x="1812.2" y="293.40" width="12.5" height="1.2" fill="#5a5afe"/>
<rect x="1824.7" y="293.40" width="12.5" height="1.2" fill="#80a040"/>
<rect x="1837.2" y="293.40" width="12.5" height="1.2" fill="#80a040"/>
<rect x="1849.7" y="293.40" width="7.3" height="1.2" fill="#a0c040"/>
<rect x="224.7" y="292.10" width="12.5" height="1.0" fill="#46ee46"/>
<rect x="237.2" y="292.10" width="12.5" height="1.0" fill="#46ee46"/>
<rect x="249.7" y="292.09" width="12.5" height="1.0" fill="#46ee46"/>
<rect x="262.2" y="292.09" width="12.5" height="1.0" fill="#46ee46"/>
<rect x="274.7" y="292.09" width="12.5" height="1.0" fill="#46ee46"/>
<rect x="287.2" y="292.08" width="12.5" height="1.0" fill="#46ee46"/>
<rect x="299.7" y="292.08" width="12.5" height="1.0" fill="#46ee46"/>
<rect x="312.2" y="292.08" width="12.5" height="1.0" fill="#46ee46"/>
<rect x="324.7" y="292.07" width="12.5" height="1.0" fill="#46ee46"/>
<rect x="337.2" y="292.07" width="12.5" height="1.0" fill="#46ee46"/>
<rect x="349.7" y="292.07" width="12.5" height="1.0" fill="#e8e820"/>
<rect x="362.2" y="292.06" width="12.5" height="1.0" fill="#46ee46"/>
<rect x="374.7" y="292.06" width="12.5" height="1.0" fill="#46ee46"/>
<rect x="387.2" y="292.06" width="12.5" height="1.0" fill="#80c040"/>
<rect x="399.7" y="292.06" width="12.5" height="1.0" fill="#e8e820"/>
<rect x="412.2" y="292.05" width="12.5" height="1.0" fill="#e8e820"/>
<rect x="424.7" y="292.05" width="12.5" height="1.0" fill="#80c040"/>
<rect x="437.2" y="292.05" width="12.5" height="1.0" fill="#46ee46"/>
<rect x="449.7" y="292.04" width="12.5" height="1.0" fill="#46ee46"/>
<rect x="462.2" y="292.04" width="12.5" height="1.0" fill="#f04040"/>
<rect x="474.7" y="292.04" width="12.5" height="1.0" fill="#46ee46"/>
<rect x="487.2" y="292.03" width="12.5" height="1.0" fill="#46ee46"/>
<rect x="499.7" y="292.03" width="12.5" height="1.0" fill="#80c040"/>
<rect x="512.2" y="292.03" width="12.5" height="1.0" fill="#46ee46"/>
<rect x="524.7" y="292.02" width="12.5" height="1.0" fill="#f04040"/>
<rect x="537.2" y="292.02" width="12.5" height="1.0" fill="#e8e820"/>
<rect x="549.7" y="292.02" width="12.5" height="1.0" fill="#46ee46"/>
<rect x="562.2" y="292.02" width="12.5" height="1.0" fill="#46ee46"/>
<rect x="574.7" y="292.01" width="12.5" height="1.0" fill="#46ee46"/>
<rect x="587.2" y="292.01" width="12.5" height="1.0" fill="#46ee46"/>
<rect x="599.7" y="292.01" width="12.5" height="1.0" fill="#46ee46"/>
<rect x="612.2" y="292.00" width="12.5" height="1.0" fill="#46ee46"/>
<rect x="624.7" y="292.00" width="12.5" height="1.0" fill="#46ee46"/>
<rect x="637.2" y="292.00" width="12.5" height="1.0" fill="#46ee46"/>
<rect x="649.7" y="291.99" width="12.5" height="1.0" fill="#80c040"/>
<rect x="662.2" y="291.99" width="12.5" height="1.0" fill="#80c040"/>
<rect x="674.7" y="291.99" width="12.5" height="1.0" fill="#f04040"/>
<rect x="687.2" y="291.99" width="12.5" height="1.0" fill="#46ee46"/>
<rect x="699.7" y="291.98" width="12.5" height="1.0" fill="#46ee46"/>
<rect x="712.2" y="291.98" width="12.5" height="1.0" fill="#46ee46"/>
<rect x="724.7" y="291.98" width="12.5" height="1.0" fill="#e8e820"/>
<rect x="737.2" y="291.97" width="12.5" height="1.0" fill="#46ee46"/>
<rect x="749.7" y="291.97" width="12.5" height="1.0" fill="#e8e820"/>
<rect x="762.2" y="291.97" width="12.5" height="1.0" fill="#46ee46"/>
<rect x="774.7" y="291.96" width="12.5" height="1.0" fill="#46ee46"/>
<rect x="787.2" y="291.96" width="12.5" height="1.0" fill="#46ee46"/>
<rect x="799.7" y="291.96" width="12.5" height="1.0" fill="#46ee46"/>
<rect x="812.2" y="291.95" width="12.5" height="1.0" fill="#46ee46"/>
<rect x="824.7" y="291.95" width="12.5" height="1.0" fill="#46ee46"/>
<rect x="837.2" y="291.95" width="12.5" height="1.0" fill="#46ee46"/>
<rect x="849.7" y="291.95" width="12.5" height="1.0" fill="#46ee46"/>
<rect x="862.2" y="291.94" width="12.5" height="1.0" fill="#46ee46"/>
<rect x="874.7" y="291.94" width="12.5" height="1.0" fill="#46ee46"/>
<rect x="887.2" y="291.94" width="12.5" height="1.0" fill="#e8e820"/>
<rect x="899.7" y="291.93" width="12.5" height="1.0" fill="#46ee46"/>
<rect x="912.2" y="291.93" width="12.5" height="1.0" fill="#46ee46"/>
<rect x="924.7" y="291.93" width="12.5" height="1.0" fill="#46ee46"/>
<rect x="937.2" y="291.92" width="12.5" height="1.0" fill="#46ee46"/>
<rect x="949.7" y="291.92" width="12.5" height="1.0" fill="#46ee46"/>
<rect x="962.2" y="291.92" width="12.5" height="1.0" fill="#46ee46"/>
<rect x="974.7" y="291.91" width="12.5" height="1.0" fill="#46ee46"/>
<rect x="987.2" y="291.91" width="12.5" height="1.0" fill="#46ee46"/>
<rect x="999.7" y="291.91" width="12.5" height="1.0" fill="#46ee46"/>
<rect x="1012.2" y="291.91" width="12.5" height="1.0" fill="#46ee46"/>
<rect x="1024.7" y="291.90" width="12.5" height="1.0" fill="#46ee46"/>
<rect x="1037.2" y="291.90" width="12.5" height="1.0" fill="#46ee46"/>
<rect x="1049.7" y="291.90" width="12.5" height="1.0" fill="#46ee46"/>
<rect x="1062.2" y="291.89" width="12.5" height="1.0" fill="#46ee46"/>
<rect x="1074.7" y="291.89" width="12.5" height="1.0" fill="#f04040"/>
<rect x="1087.2" y="291.89" width="12.5" height="1.0" fill="#46ee46"/>
<rect x="1099.7" y="291.88" width="12.5" height="1.0" fill="#80c040"/>
<rect x="1112.2" y="291.88" width="12.5" height="1.0" fill="#46ee46"/>
<rect x="1124.7" y="291.88" width="12.5" height="1.0" fill="#46ee46"/>
<rect x="1137.2" y="291.87" width="12.5" height="1.0" fill="#46ee46"/>
<rect x="1149.7" y="291.87" width="12.5" height="1.0" fill="#46ee46"/>
<rect x="1162.2" y="291.87" width="12.5" height="1.0" fill="#46ee46"/>
<rect x="1174.7" y="291.87" width="12.5" height="1.0" fill="#f04040"/>
<rect x="1187.2" y="291.86" width="12.5" height="1.0" fill="#46ee46"/>
<rect x="1199.7" y="291.86" width="12.5" height="1.0" fill="#80c040"/>
<rect x="1212.2" y="291.86" width="12.5" height="1.0" fill="#80c040"/>
<rect x="1224.7" y="291.85" width="12.5" height="1.0" fill="#f04040"/>
<rect x="1237.2" y="291.85" width="12.5" height="1.0" fill="#46ee46"/>
<rect x="1249.7" y="291.85" width="12.5" height="1.0" fill="#80c040"/>
<rect x="1262.2" y="291.84" width="12.5" height="1.0" fill="#46ee46"/>
<rect x="1274.7" y="291.84" width="12.5" height="1.0" fill="#46ee46"/>
<rect x="1287.2" y="291.84" width="12.5" height="1.0" fill="#46ee46"/>
<rect x="1299.7" y="291.84" width="12.5" height="1.0" fill="#80c040"/>
<rect x="1312.2" y="291.83" width="12.5" height="1.0" fill="#80c040"/>
<rect x="1324.7" y="291.83" width="12.5" height="1.0" fill="#80c040"/>
<rect x="1337.2" y="291.83" width="12.5" height="1.0" fill="#46ee46"/>
<rect x="1349.7" y="291.82" width="12.5" height="1.0" fill="#80c040"/>
<rect x="1362.2" y="291.82" width="12.5" height="1.0" fill="#f04040"/>
<rect x="1374.7" y="291.82" width="12.5" height="1.0" fill="#f04040"/>
<rect x="1387.2" y="291.81" width="12.5" height="1.0" fill="#46ee46"/>
<rect x="1399.7" y="291.81" width="12.5" height="1.0" fill="#46ee46"/>
<rect x="1412.2" y="291.81" width="12.5" height="1.0" fill="#46ee46"/>
<rect x="1424.7" y="291.80" width="12.5" height="1.0" fill="#46ee46"/>
<rect x="1437.2" y="291.80" width="12.5" height="1.0" fill="#46ee46"/>
<rect x="1449.7" y="291.80" width="12.5" height="1.0" fill="#80c040"/>
<rect x="1462.2" y="291.80" width="12.5" height="1.0" fill="#46ee46"/>
<rect x="1474.7" y="291.79" width="12.5" height="1.0" fill="#f04040"/>
<rect x="1487.2" y="291.79" width="12.5" height="1.0" fill="#f04040"/>
<rect x="1499.7" y="291.79" width="12.5" height="1.0" fill="#f04040"/>
<rect x="1512.2" y="291.78" width="12.5" height="1.0" fill="#e8e820"/>
<rect x="1524.7" y="291.78" width="12.5" height="1.0" fill="#46ee46"/>
<rect x="1537.2" y="291.78" width="12.5" height="1.0" fill="#46ee46"/>
<rect x="1549.7" y="291.77" width="12.5" height="1.0" fill="#46ee46"/>
<rect x="1562.2" y="291.77" width="12.5" height="1.0" fill="#46ee46"/>
<rect x="1574.7" y="291.77" width="12.5" height="1.0" fill="#46ee46"/>
<rect x="1587.2" y="291.76" width="12.5" height="1.0" fill="#f04040"/>
<rect x="1599.7" y="291.76" width="12.5" height="1.0" fill="#46ee46"/>
<rect x="1612.2" y="291.76" width="12.5" height="1.0" fill="#46ee46"/>
<rect x="1624.7" y="291.76" width="12.5" height="1.0" fill="#46ee46"/>
<rect x="1637.2" y="291.75" width="12.5" height="1.0" fill="#46ee46"/>
<rect x="1649.7" y="291.75" width="12.5" height="1.0" fill="#46ee46"/>
<rect x="1662.2" y="291.75" width="12.5" height="1.0" fill="#46ee46"/>
<rect x="1674.7" y="291.74" width="12.5" height="1.0" fill="#46ee46"/>
<rect x="1687.2" y="291.74" width="12.5" height="1.0" fill="#46ee46"/>
<rect x="1699.7" y="291.74" width="12.5" height="1.0" fill="#46ee46"/>
<rect x="1712.2" y="291.73" width="12.5" height="1.0" fill="#e8e820"/>
<rect x="1724.7" y="291.73" width="12.5" height="1.0" fill="#46ee46"/>
<rect x="1737.2" y="291.73" width="12.5" height="1.0" fill="#e8e820"/>
<rect x="1749.7" y="291.72" width="12.5" height="1.0" fill="#f04040"/>
<rect x="1762.2" y="291.72" width="12.5" height="1.0" fill="#46ee46"/>
<rect x="1774.7" y="291.72" width="12.5" height="1.0" fill="#f04040"/>
<rect x="1787.2" y="291.72" width="12.5" height="1.0" fill="#f04040"/>
<rect x="1799.7" y="291.71" width="12.5" height="1.0" fill="#46ee46"/>
<rect x="1812.2" y="291.71" width="12.5" height="1.0" fill="#46ee46"/>
<rect x="1824.7" y="291.71" width="12.5" height="1.0" fill="#46ee46"/>
<rect x="1837.2" y="291.70" width="12.5" height="1.0" fill="#46ee46"/>
<rect x="1849.7" y="291.70" width="7.3" height="1.0" fill="#46ee46"/>
<text x="181.29 194.74 208.18 221.63 235.08 248.52 261.97 275.41 288.86 302.31 315.75 329.20 342.65 356.09 369.54 382.98 396.43 409.88 423.32 436.77 450.22 463.66 477.11 490.55 504.00 517.45 530.89 544.34 557.78 571.23 584.68 598.12 611.57 625.02 638.46 651.91 665.35 678.80 692.25 705.69 719.14 732.59 746.03 759.48 772.92 786.37 799.82 813.26 826.71" y="309.20" font-size="15.4" fill="#0606cc" text-anchor="middle" transform="scale(0.93,1)">CCTGCAGGCAGCAGAGAAACAAATGAAGGACAAACAGGACGAGGAGCAG</text>
<text x="947.73 961.17 974.62 988.06 1001.51 1014.96 1028.40 1041.85 1055.30 1068.74 1082.19 1095.63 1109.08 1122.53 1135.97 1149.42 1162.87 1176.31 1189.76 1203.20 1216.65 1230.10 1243.54 1256.99 1270.44 1283.88 1297.33 1310.77 1324.22 1337.67 1351.11 1364.56 1378.01 1391.45 1404.90 1418.34" y="309.20" font-size="15.4" fill="#aaaae6" text-anchor="middle" transform="scale(0.93,1)">AGGCAGCAGAGAAACAAATGAAGGTCAAACAGGACG</text>
<text x="1431.79 1445.24 1458.68 1472.13 1485.58 1499.02 1512.47 1525.91 1539.36 1552.81 1566.25 1579.70 1593.15 1606.59 1620.04 1633.48 1646.93 1660.38 1673.82 1687.27 1700.72 1714.16 1727.61 1741.05 1754.50 1767.95 1781.39 1794.84 1808.28 1821.73 1835.18 1848.62 1862.07 1875.52 1888.96 1902.41 1915.85 1929.30 1942.75 1956.19 1969.64 1983.09 1996.53" y="309.20" font-size="15.4" fill="#0606cc" text-anchor="middle" transform="scale(0.93,1)">GGAGGCAGAGGACAAGGAGGATGATGAGGACAAAGATGAGGAT</text>
<text x="181.29 194.74 208.18 221.63 235.08 248.52 261.97 275.41 288.86 302.31 315.75 329.20 342.65 356.09 369.54 382.98 396.43 409.88 423.32 436.77 450.22 463.66 477.11 490.55 504.00 517.45 530.89 544.34 557.78 571.23 584.68 598.12 611.57 625.02 638.46 651.91 665.35 678.80 692.25 705.69 719.14 732.59 746.03" y="325.45" font-size="15.4" fill="#0606cc" text-anchor="middle" transform="scale(0.93,1)">CCTGCAGGCAGCAGAGAAACAAATGAAGGACAAACAGGACGAG</text>
<text x="759.48 772.92 786.37 799.82 813.26 826.71 840.16" y="325.45" font-size="15.4" fill="#aaaae6" text-anchor="middle" transform="scale(0.93,1)">AGGCAGA</text>
<text x="947.73 961.17 974.62 988.06 1001.51 1014.96 1028.40 1041.85 1055.30 1068.74 1082.19 1095.63 1109.08 1122.53 1135.97 1149.42 1162.87 1176.31 1189.76 1203.20 1216.65 1230.10 1243.54 1256.99 1270.44 1283.88 1297.33 1310.77 1324.22 1337.67 1351.11 1364.56 1378.01 1391.45 1404.90 1418.34" y="325.45" font-size="15.4" fill="#aaaae6" text-anchor="middle" transform="scale(0.93,1)">AGGCAGCAGAGAAACAAATGAAGGACAAACAGGACG</text>
<text x="1431.79 1445.24 1458.68 1472.13 1485.58 1499.02 1512.47 1525.91 1539.36 1552.81 1566.25 1579.70 1593.15 1606.59 1620.04 1633.48 1646.93 1660.38 1673.82 1687.27 1700.72 1714.16 1727.61 1741.05 1754.50 1767.95 1781.39 1794.84 1808.28 1821.73 1835.18 1848.62 1862.07 1875.52 1888.96 1902.41 1915.85 1929.30 1942.75 1956.19 1969.64 1983.09 1996.53" y="325.45" font-size="15.4" fill="#0606cc" text-anchor="middle" transform="scale(0.93,1)">GGAGGCAGAGGACAAGGAGGATGATGAGGACAAAGATGAGGAT</text>
<text x="181.29 194.74 208.18 221.63 235.08 248.52 261.97 275.41 288.86 302.31 315.75 329.20 342.65 356.09 369.54 382.98 396.43 409.88 423.32 436.77 450.22 463.66 477.11 490.55 504.00 517.45 530.89 544.34 557.78 571.23 584.68 598.12 611.57 625.02 638.46 651.91 665.35 678.80 692.25 705.69 719.14 732.59 746.03" y="341.70" font-size="15.4" fill="#0606cc" text-anchor="middle" transform="scale(0.93,1)">CCTGCAGGCAGCAGAGAAACAAATGAAGGACAAACAGGACGAG</text>
<text x="759.48 772.92 786.37 799.82 813.26 826.71 840.16" y="341.70" font-size="15.4" fill="#aaaae6" text-anchor="middle" transform="scale(0.93,1)">AGGCAGA</text>
<text x="947.73 961.17 974.62 988.06 1001.51 1014.96 1028.40 1041.85 1055.30 1068.74 1082.19 1095.63 1109.08 1122.53 1135.97 1149.42 1162.87 1176.31 1189.76 1203.20 1216.65 1230.10 1243.54 1256.99 1270.44 1283.88 1297.33 1310.77 1324.22 1337.67 1351.11 1364.56 1378.01 1391.45 1404.90 1418.34" y="341.70" font-size="15.4" fill="#aaaae6" text-anchor="middle" transform="scale(0.93,1)">AGGCAGCAGAGAAACAAATGAAGGACAAACAGGACG</text>
<text x="1431.79 1445.24 1458.68 1472.13 1485.58 1499.02 1512.47 1525.91 1539.36 1552.81 1566.25 1579.70 1593.15 1606.59 1620.04 1633.48 1646.93 1660.38 1673.82 1687.27 1700.72 1714.16 1727.61 1741.05 1754.50 1767.95 1781.39 1794.84 1808.28 1821.73 1835.18 1848.62 1862.07 1875.52 1888.96 1902.41 1915.85 1929.30 1942.75 1956.19 1969.64 1983.09 1996.53" y="341.70" font-size="15.4" fill="#0606cc" text-anchor="middle" transform="scale(0.93,1)">GGAGGCAGAGGACAAGGAGGATGATGAGGACAAAGATGAGGAT</text>
<text x="181.29 194.74 208.18 221.63 235.08 248.52 261.97 275.41 288.86 302.31 315.75 329.20 342.65 356.09 369.54 382.98 396.43 409.88 423.32 436.77 450.22 463.66 477.11 490.55 504.00 517.45 530.89 544.34 557.78 571.23 584.68 598.12 611.57 625.02 638.46 651.91 665.35 678.80 692.25 705.69 719.14 732.59 746.03 759.48 772.92 786.37 799.82 813.26 826.71 840.16 853.60" y="357.95" font-size="15.4" fill="#0606cc" text-anchor="middle" transform="scale(0.93,1)">CCTGCAGGCAGCAGAGAAACAAATGAAGGACAAACAGGACGAGGAGCAGAG</text>
<text x="947.73 961.17 974.62 988.06 1001.51 1014.96 1028.40 1041.85 1055.30 1068.74 1082.19 1095.63 1109.08 1122.53 1135.97 1149.42 1162.87 1176.31 1189.76 1203.20 1216.65 1230.10 1243.54 1256.99 1270.44 1283.88 1297.33 1310.77 1324.22 1337.67 1351.11 1364.56 1378.01 1391.45 1404.90 1418.34" y="357.95" font-size="15.4" fill="#aaaae6" text-anchor="middle" transform="scale(0.93,1)">AGGCAGCAGAGAAACAAATGAAGGACAAACAGGACG</text>
<text x="1431.79 1445.24 1458.68 1472.13 1485.58 1499.02 1512.47 1525.91 1539.36 1552.81 1566.25 1579.70 1593.15 1606.59 1620.04 1633.48 1646.93 1660.38 1673.82 1687.27 1700.72 1714.16 1727.61 1741.05 1754.50 1767.95 1781.39 1794.84 1808.28 1821.73 1835.18 1848.62 1862.07 1875.52 1888.96 1902.41 1915.85 1929.30 1942.75 1956.19 1969.64 1983.09 1996.53" y="357.95" font-size="15.4" fill="#0606cc" text-anchor="middle" transform="scale(0.93,1)">GGAGGCAGAGGACAAGGAGGATGATGAGGACAAAGATGAGGAT</text>
<rect x="375.58" y="361.00" width="11.2" height="16" fill="#f3efd3"/>
<text x="181.29 194.74 208.18 221.63 235.08 248.52 261.97 275.41 288.86 302.31 315.75 329.20 342.65 356.09 369.54 382.98 396.43" y="374.20" font-size="15.4" fill="#0606cc" text-anchor="middle" transform="scale(0.93,1)">CCTGCAGGCAGCAGAGA</text>
<text x="409.88" y="374.20" font-size="15.4" fill="#201800" text-anchor="middle" transform="scale(0.93,1)">G</text>
<text x="423.32 436.77 450.22 463.66 477.11 490.55 504.00 517.45 530.89 544.34 557.78 571.23 584.68 598.12 611.57 625.02 638.46 651.91 665.35 678.80 692.25 705.69 719.14 732.59 746.03 759.48 772.92 786.37 799.82 813.26 826.71 840.16 853.60" y="374.20" font-size="15.4" fill="#0606cc" text-anchor="middle" transform="scale(0.93,1)">ACAAATGAAGGACAAACAGGACGAGGAGCAGAG</text>
<text x="947.73 961.17 974.62 988.06 1001.51 1014.96 1028.40 1041.85 1055.30 1068.74 1082.19 1095.63 1109.08 1122.53 1135.97 1149.42 1162.87 1176.31 1189.76 1203.20 1216.65 1230.10 1243.54 1256.99 1270.44 1283.88 1297.33 1310.77 1324.22 1337.67 1351.11 1364.56 1378.01 1391.45 1404.90 1418.34" y="374.20" font-size="15.4" fill="#aaaae6" text-anchor="middle" transform="scale(0.93,1)">AGGCAGCAGAGAAACAAATGAAGGACAAACAGGACG</text>
<text x="1431.79 1445.24 1458.68 1472.13 1485.58 1499.02 1512.47 1525.91 1539.36 1552.81 1566.25 1579.70 1593.15 1606.59 1620.04 1633.48 1646.93 1660.38 1673.82 1687.27 1700.72 1714.16 1727.61 1741.05 1754.50 1767.95 1781.39 1794.84 1808.28 1821.73 1835.18 1848.62 1862.07 1875.52 1888.96 1902.41 1915.85 1929.30 1942.75 1956.19 1969.64 1983.09 1996.53" y="374.20" font-size="15.4" fill="#0606cc" text-anchor="middle" transform="scale(0.93,1)">GGAGGCAGAGGACAAGGAGGATGATGAGGACAAAGATGAGGAT</text>
<rect x="388.09" y="377.25" width="11.2" height="16" fill="#f3efd3"/>
<rect x="188.01" y="377.25" width="11.2" height="16" fill="#f3efd3"/>
<text x="181.29 194.74" y="390.45" font-size="15.4" fill="#0606cc" text-anchor="middle" transform="scale(0.93,1)">CC</text>
<text x="208.18" y="390.45" font-size="15.4" fill="#201800" text-anchor="middle" transform="scale(0.93,1)">G</text>
<text x="221.63 235.08 248.52 261.97 275.41 288.86 302.31 315.75 329.20 342.65 356.09 369.54 382.98 396.43 409.88" y="390.45" font-size="15.4" fill="#0606cc" text-anchor="middle" transform="scale(0.93,1)">GCAGGCAGCAGAGAA</text>
<text x="423.32" y="390.45" font-size="15.4" fill="#201800" text-anchor="middle" transform="scale(0.93,1)">G</text>
<text x="436.77 450.22 463.66 477.11 490.55 504.00 517.45 530.89 544.34 557.78 571.23 584.68 598.12 611.57 625.02 638.46 651.91 665.35 678.80 692.25 705.69 719.14 732.59 746.03 759.48 772.92 786.37 799.82 813.26 826.71 840.16 853.60" y="390.45" font-size="15.4" fill="#0606cc" text-anchor="middle" transform="scale(0.93,1)">CAAATGAAGGACAAACAGGACGAGGAGCAGAG</text>
<text x="947.73 961.17 974.62 988.06 1001.51 1014.96 1028.40 1041.85 1055.30 1068.74 1082.19 1095.63 1109.08 1122.53 1135.97 1149.42 1162.87 1176.31 1189.76 1203.20 1216.65 1230.10 1243.54 1256.99 1270.44 1283.88 1297.33 1310.77 1324.22 1337.67 1351.11 1364.56 1378.01 1391.45 1404.90 1418.34" y="390.45" font-size="15.4" fill="#aaaae6" text-anchor="middle" transform="scale(0.93,1)">AGGCAGCAGAGAAACAAATGAAGGACAAACAGGACG</text>
<text x="1431.79 1445.24 1458.68 1472.13 1485.58 1499.02 1512.47 1525.91 1539.36 1552.81 1566.25 1579.70 1593.15 1606.59 1620.04 1633.48 1646.93 1660.38 1673.82 1687.27 1700.72 1714.16 1727.61 1741.05 1754.50 1767.95 1781.39 1794.84 1808.28 1821.73 1835.18 1848.62 1862.07 1875.52 1888.96 1902.41 1915.85 1929.30 1942.75 1956.19 1969.64 1983.09 1996.53" y="390.45" font-size="15.4" fill="#0606cc" text-anchor="middle" transform="scale(0.93,1)">GGAGGCAGAGGACAAGGAGGATGATGAGGACAAAGATGAGGAT</text>
<rect x="188.01" y="393.50" width="11.2" height="16" fill="#d9d9e5"/>
<rect x="175.50" y="393.50" width="11.2" height="16" fill="#d9d9e5"/>
<rect x="213.02" y="393.50" width="11.2" height="16" fill="#d9d9e5"/>
<rect x="163.00" y="393.50" width="11.2" height="16" fill="#d9d9e5"/>
<rect x="200.52" y="393.50" width="11.2" height="16" fill="#d9d9e5"/>
<text x="181.29" y="406.70" font-size="15.4" fill="#1a0e04" text-anchor="middle" transform="scale(0.93,1)">N</text>
<text x="194.74" y="406.70" font-size="15.4" fill="#1a0e04" text-anchor="middle" transform="scale(0.93,1)">N</text>
<text x="208.18" y="406.70" font-size="15.4" fill="#1a0e04" text-anchor="middle" transform="scale(0.93,1)">N</text>
<text x="221.63" y="406.70" font-size="15.4" fill="#1a0e04" text-anchor="middle" transform="scale(0.93,1)">N</text>
<text x="235.08" y="406.70" font-size="15.4" fill="#1a0e04" text-anchor="middle" transform="scale(0.93,1)">N</text>
<text x="248.52 261.97 275.41 288.86 302.31 315.75 329.20 342.65 356.09 369.54 382.98 396.43 409.88 423.32 436.77 450.22 463.66 477.11 490.55 504.00 517.45 530.89 544.34 557.78 571.23 584.68 598.12 611.57 625.02 638.46 651.91 665.35 678.80 692.25 705.69 719.14 732.59 746.03 759.48 772.92 786.37 799.82 813.26 826.71 840.16 853.60 867.05" y="406.70" font-size="15.4" fill="#0606cc" text-anchor="middle" transform="scale(0.93,1)">AGGCAGCAGAGAAACAAATGAAGGACAAACAGGACGAGGAGCAGAGG</text>
<text x="947.73 961.17 974.62 988.06 1001.51 1014.96 1028.40 1041.85 1055.30 1068.74 1082.19 1095.63 1109.08 1122.53 1135.97 1149.42 1162.87 1176.31 1189.76 1203.20 1216.65 1230.10 1243.54 1256.99 1270.44 1283.88 1297.33 1310.77 1324.22 1337.67 1351.11 1364.56 1378.01 1391.45 1404.90 1418.34" y="406.70" font-size="15.4" fill="#aaaae6" text-anchor="middle" transform="scale(0.93,1)">AGGCAGCAGAGAAACAAATGAAGGACAAACAGGACG</text>
<text x="1431.79 1445.24 1458.68 1472.13 1485.58 1499.02 1512.47 1525.91 1539.36 1552.81 1566.25 1579.70 1593.15 1606.59 1620.04 1633.48 1646.93 1660.38 1673.82 1687.27 1700.72 1714.16 1727.61 1741.05 1754.50 1767.95 1781.39 1794.84 1808.28 1821.73 1835.18 1848.62 1862.07 1875.52 1888.96 1902.41 1915.85 1929.30 1942.75 1956.19 1969.64 1983.09 1996.53" y="406.70" font-size="15.4" fill="#0606cc" text-anchor="middle" transform="scale(0.93,1)">GGAGGCAGAGGACAAGGAGGATGATGAGGACAAAGATGAGGAT</text>
<text x="181.29 194.74 208.18 221.63 235.08 248.52 261.97 275.41 288.86 302.31 315.75 329.20 342.65 356.09 369.54 382.98 396.43 409.88 423.32 436.77 450.22 463.66 477.11 490.55 504.00 517.45 530.89 544.34 557.78 571.23 584.68 598.12 611.57 625.02 638.46 651.91 665.35 678.80 692.25 705.69 719.14 732.59 746.03 759.48 772.92 786.37 799.82 813.26 826.71 840.16 853.60 867.05 880.49" y="422.95" font-size="15.4" fill="#0606cc" text-anchor="middle" transform="scale(0.93,1)">CCTGCAGGCAGCAGAGAAACAAATGAAGGACAAACAGGACGAGGAGCAGAGGC</text>
<text x="1431.79 1445.24 1458.68 1472.13 1485.58 1499.02 1512.47 1525.91 1539.36 1552.81 1566.25 1579.70 1593.15 1606.59 1620.04 1633.48 1646.93 1660.38 1673.82 1687.27 1700.72 1714.16 1727.61 1741.05 1754.50 1767.95 1781.39 1794.84 1808.28 1821.73 1835.18 1848.62 1862.07 1875.52 1888.96 1902.41 1915.85 1929.30 1942.75 1956.19 1969.64 1983.09 1996.53" y="422.95" font-size="15.4" fill="#0606cc" text-anchor="middle" transform="scale(0.93,1)">GGAGGCAGAGGACAAGGAGGATGATGAGGACAAAGATGAGGAT</text>
<text x="181.29 194.74 208.18 221.63 235.08 248.52 261.97 275.41 288.86 302.31 315.75 329.20 342.65 356.09 369.54 382.98 396.43 409.88 423.32 436.77 450.22 463.66 477.11 490.55 504.00 517.45 530.89 544.34 557.78 571.23 584.68 598.12 611.57 625.02 638.46 651.91 665.35 678.80 692.25 705.69 719.14 732.59 746.03 759.48 772.92 786.37 799.82 813.26 826.71 840.16 853.60 867.05 880.49" y="439.20" font-size="15.4" fill="#0606cc" text-anchor="middle" transform="scale(0.93,1)">CCTGCAGGCAGCAGAGAAACAAATGAAGGACAAACAGGACGAGGAGCAGAGGC</text>
<text x="1431.79 1445.24 1458.68 1472.13 1485.58 1499.02 1512.47 1525.91 1539.36 1552.81 1566.25 1579.70 1593.15 1606.59 1620.04 1633.48 1646.93 1660.38 1673.82 1687.27 1700.72 1714.16 1727.61 1741.05 1754.50 1767.95 1781.39 1794.84 1808.28 1821.73 1835.18 1848.62 1862.07 1875.52 1888.96 1902.41 1915.85 1929.30 1942.75 1956.19 1969.64 1983.09 1996.53" y="439.20" font-size="15.4" fill="#0606cc" text-anchor="middle" transform="scale(0.93,1)">GGAGGCAGAGGACAAGGAGGATGATGAGGACAAAGATGAGGAT</text>
<text x="181.29 194.74 208.18 221.63 235.08 248.52 261.97 275.41 288.86 302.31 315.75 329.20 342.65 356.09 369.54 382.98 396.43 409.88 423.32 436.77 450.22 463.66 477.11 490.55 504.00 517.45 530.89 544.34 557.78 571.23 584.68 598.12 611.57 625.02 638.46 651.91 665.35 678.80 692.25 705.69 719.14 732.59 746.03" y="455.45" font-size="15.4" fill="#0606cc" text-anchor="middle" transform="scale(0.93,1)">CCTGCAGGCAGCAGAGAAACAAATGAAGGACAAACAGGACGAG</text>
<text x="759.48 772.92 786.37 799.82 813.26 826.71 840.16 853.60 867.05 880.49 893.94 907.39 920.83 934.28" y="455.45" font-size="15.4" fill="#aaaae6" text-anchor="middle" transform="scale(0.93,1)">AGGCAGAGGACAAG</text>
<text x="1431.79 1445.24 1458.68 1472.13 1485.58 1499.02 1512.47 1525.91 1539.36 1552.81 1566.25 1579.70 1593.15 1606.59 1620.04 1633.48 1646.93 1660.38 1673.82 1687.27 1700.72 1714.16 1727.61 1741.05 1754.50 1767.95 1781.39 1794.84 1808.28 1821.73 1835.18 1848.62 1862.07 1875.52 1888.96 1902.41 1915.85 1929.30 1942.75 1956.19 1969.64 1983.09 1996.53" y="455.45" font-size="15.4" fill="#0606cc" text-anchor="middle" transform="scale(0.93,1)">GGAGGCAGAGGACAAGGAGGATGATGAGGACAAAGATGAGGAT</text>
<text x="181.29 194.74 208.18 221.63 235.08 248.52 261.97 275.41 288.86 302.31 315.75 329.20 342.65 356.09 369.54 382.98 396.43 409.88 423.32 436.77 450.22 463.66 477.11 490.55 504.00 517.45 530.89 544.34 557.78 571.23 584.68 598.12 611.57 625.02 638.46 651.91 665.35 678.80 692.25 705.69 719.14 732.59 746.03" y="471.70" font-size="15.4" fill="#0606cc" text-anchor="middle" transform="scale(0.93,1)">CCTGCAGGCAGCAGAGAAACAAATGAAGGACAAACAGGACGAG</text>
<text x="759.48 772.92 786.37 799.82 813.26 826.71 840.16 853.60 867.05 880.49 893.94 907.39 920.83 934.28 947.73" y="471.70" font-size="15.4" fill="#aaaae6" text-anchor="middle" transform="scale(0.93,1)">AGGCAGAGGACAAGG</text>
<text x="1431.79 1445.24 1458.68 1472.13 1485.58 1499.02 1512.47 1525.91 1539.36 1552.81 1566.25 1579.70 1593.15 1606.59 1620.04 1633.48 1646.93 1660.38 1673.82 1687.27 1700.72 1714.16 1727.61 1741.05 1754.50 1767.95 1781.39 1794.84 1808.28 1821.73 1835.18 1848.62 1862.07 1875.52 1888.96 1902.41 1915.85 1929.30 1942.75 1956.19 1969.64 1983.09 1996.53" y="471.70" font-size="15.4" fill="#0606cc" text-anchor="middle" transform="scale(0.93,1)">GGAGGCAGAGGACAAGGAGGATGATGAGGACAAAGATGAGGAT</text>
<rect x="1851.18" y="474.75" width="11.2" height="16" fill="#d9d9e5"/>
<rect x="1638.59" y="474.75" width="11.2" height="16" fill="#d9d9e5"/>
<text x="181.29 194.74 208.18 221.63 235.08 248.52 261.97 275.41 288.86 302.31 315.75 329.20 342.65 356.09 369.54 382.98 396.43 409.88 423.32 436.77 450.22 463.66 477.11 490.55 504.00 517.45 530.89 544.34 557.78 571.23 584.68 598.12 611.57 625.02 638.46 651.91 665.35 678.80 692.25 705.69 719.14 732.59 746.03 759.48 772.92 786.37 799.82 813.26 826.71 840.16 853.60 867.05 880.49 893.94 907.39 920.83 934.28 947.73 961.17" y="487.95" font-size="15.4" fill="#0606cc" text-anchor="middle" transform="scale(0.93,1)">CCTGCAGGCAGCAGAGAAACAAATGAAGGACAAACAGGACGAGGAGCAGAGGCTTAAGG</text>
<text x="1431.79 1445.24 1458.68 1472.13 1485.58 1499.02 1512.47 1525.91 1539.36 1552.81 1566.25 1579.70 1593.15 1606.59 1620.04 1633.48 1646.93 1660.38 1673.82 1687.27 1700.72 1714.16 1727.61 1741.05 1754.50" y="487.95" font-size="15.4" fill="#0606cc" text-anchor="middle" transform="scale(0.93,1)">GGAGGCAGAGGACAAGGAGGATGAT</text>
<text x="1767.95" y="487.95" font-size="15.4" fill="#1a0e04" text-anchor="middle" transform="scale(0.93,1)">N</text>
<text x="1781.39 1794.84 1808.28 1821.73 1835.18 1848.62 1862.07 1875.52 1888.96 1902.41 1915.85 1929.30 1942.75 1956.19 1969.64 1983.09" y="487.95" font-size="15.4" fill="#0606cc" text-anchor="middle" transform="scale(0.93,1)">AGGACAAAGATGAGGA</text>
<text x="1996.53" y="487.95" font-size="15.4" fill="#1a0e04" text-anchor="middle" transform="scale(0.93,1)">N</text>
<rect x="475.62" y="491.00" width="11.2" height="16" fill="#d9d9e5"/>
<text x="181.29 194.74 208.18 221.63 235.08 248.52 261.97 275.41 288.86 302.31 315.75 329.20 342.65 356.09 369.54 382.98 396.43 409.88 423.32 436.77 450.22 463.66 477.11 490.55 504.00" y="504.20" font-size="15.4" fill="#0606cc" text-anchor="middle" transform="scale(0.93,1)">CCTGCAGGCAGCAGAGAAACAAATG</text>
<text x="517.45" y="504.20" font-size="15.4" fill="#1a0e04" text-anchor="middle" transform="scale(0.93,1)">N</text>
<text x="530.89 544.34 557.78 571.23 584.68 598.12 611.57 625.02 638.46 651.91 665.35 678.80 692.25 705.69 719.14 732.59 746.03" y="504.20" font-size="15.4" fill="#0606cc" text-anchor="middle" transform="scale(0.93,1)">AGGACAAACAGGACGAG</text>
<text x="759.48 772.92 786.37 799.82 813.26 826.71 840.16 853.60 867.05 880.49 893.94 907.39 920.83 934.28 947.73 961.17 974.62 988.06" y="504.20" font-size="15.4" fill="#aaaae6" text-anchor="middle" transform="scale(0.93,1)">AGGCAGAGGACAAGGAGG</text>
<text x="1431.79 1445.24 1458.68 1472.13 1485.58 1499.02 1512.47 1525.91 1539.36 1552.81 1566.25 1579.70 1593.15 1606.59 1620.04 1633.48 1646.93 1660.38 1673.82 1687.27 1700.72 1714.16 1727.61 1741.05 1754.50 1767.95 1781.39 1794.84 1808.28 1821.73 1835.18 1848.62 1862.07 1875.52 1888.96 1902.41 1915.85 1929.30 1942.75 1956.19 1969.64 1983.09 1996.53" y="504.20" font-size="15.4" fill="#0606cc" text-anchor="middle" transform="scale(0.93,1)">GGAGGCAGAGGACAAGGAGGATGATGAGGACAAAGATGAGGAT</text>
<rect x="175.50" y="507.25" width="11.2" height="16" fill="#f3efd3"/>
<rect x="613.18" y="507.25" width="11.2" height="16" fill="#d6d8f6"/>
<rect x="525.64" y="507.25" width="11.2" height="16" fill="#e0ecd6"/>
<text x="181.29" y="520.45" font-size="15.4" fill="#0606cc" text-anchor="middle" transform="scale(0.93,1)">C</text>
<text x="194.74" y="520.45" font-size="15.4" fill="#201800" text-anchor="middle" transform="scale(0.93,1)">G</text>
<text x="208.18 221.63 235.08 248.52 261.97 275.41 288.86 302.31 315.75 329.20 342.65 356.09 369.54 382.98 396.43 409.88 423.32 436.77 450.22 463.66 477.11 490.55 504.00 517.45 530.89 544.34 557.78" y="520.45" font-size="15.4" fill="#0606cc" text-anchor="middle" transform="scale(0.93,1)">TGCAGGCAGCAGAGAAACAAATGAAGG</text>
<text x="571.23" y="520.45" font-size="15.4" fill="#0c1a04" text-anchor="middle" transform="scale(0.93,1)">T</text>
<text x="584.68 598.12 611.57 625.02 638.46 651.91" y="520.45" font-size="15.4" fill="#0606cc" text-anchor="middle" transform="scale(0.93,1)">CAAACA</text>
<text x="665.35" y="520.45" font-size="15.4" fill="#101040" text-anchor="middle" transform="scale(0.93,1)">C</text>
<text x="678.80 692.25 705.69 719.14 732.59 746.03" y="520.45" font-size="15.4" fill="#0606cc" text-anchor="middle" transform="scale(0.93,1)">GACGAG</text>
<text x="759.48 772.92 786.37 799.82 813.26 826.71 840.16 853.60 867.05 880.49 893.94 907.39 920.83 934.28 947.73 961.17 974.62 988.06 1001.51" y="520.45" font-size="15.4" fill="#aaaae6" text-anchor="middle" transform="scale(0.93,1)">AGGCAGAGGACAAGGTGGA</text>
<text x="1431.79 1445.24 1458.68 1472.13 1485.58 1499.02 1512.47 1525.91 1539.36 1552.81 1566.25 1579.70 1593.15 1606.59 1620.04 1633.48 1646.93 1660.38 1673.82 1687.27 1700.72 1714.16 1727.61 1741.05 1754.50 1767.95 1781.39 1794.84 1808.28 1821.73 1835.18 1848.62 1862.07 1875.52 1888.96 1902.41 1915.85 1929.30 1942.75 1956.19 1969.64 1983.09 1996.53" y="520.45" font-size="15.4" fill="#0606cc" text-anchor="middle" transform="scale(0.93,1)">GGAGGCAGAGGACAAGGAGGATGATGAGGACAAAGATGAGGAT</text>
<text x="181.29 194.74 208.18 221.63 235.08 248.52 261.97 275.41 288.86 302.31 315.75 329.20 342.65 356.09 369.54 382.98 396.43 409.88 423.32 436.77 450.22 463.66 477.11 490.55 504.00 517.45 530.89 544.34 557.78 571.23 584.68 598.12 611.57 625.02 638.46 651.91 665.35 678.80 692.25 705.69 719.14 732.59 746.03 759.48 772.92 786.37 799.82 813.26 826.71 840.16 853.60 867.05 880.49 893.94 907.39 920.83 934.28 947.73 961.17 974.62 988.06 1001.51" y="536.70" font-size="15.4" fill="#0606cc" text-anchor="middle" transform="scale(0.93,1)">CCTGCAGGCAGCAGAGAAACAAATGAAGGACAAACAGGACGAGGAGCAGAGGCTTAAGGAGG</text>
<text x="1431.79 1445.24 1458.68 1472.13 1485.58 1499.02 1512.47 1525.91 1539.36 1552.81 1566.25 1579.70 1593.15 1606.59 1620.04 1633.48 1646.93 1660.38 1673.82 1687.27 1700.72 1714.16 1727.61 1741.05 1754.50 1767.95 1781.39 1794.84 1808.28 1821.73 1835.18 1848.62 1862.07 1875.52 1888.96 1902.41 1915.85 1929.30 1942.75 1956.19 1969.64 1983.09 1996.53" y="536.70" font-size="15.4" fill="#0606cc" text-anchor="middle" transform="scale(0.93,1)">GGAGGCAGAGGACAAGGAGGATGATGAGGACAAAGATGAGGAT</text>
</g>
<rect x="1857" y="85" width="21" height="44" fill="#ffffff" />
<rect x="1857.5" y="128.7" width="20.5" height="409.5" fill="#f0f0f0" />
<rect x="1858.3" y="150.2" width="18.7" height="169.2" fill="#cdcdcd" />
<path d="M1863.8 142.4 L1868.3 137.6 L1872.8 142.4" stroke="#505050" stroke-width="2" fill="none"/>
<path d="M1863.8 525 L1868.3 529.8 L1872.8 525" stroke="#505050" stroke-width="2" fill="none"/>
<rect x="168" y="538.4" width="1689" height="19.6" fill="#f0f0f0" />
<rect x="548.2" y="538.4" width="19.6" height="19.6" fill="#cdcdcd" />
<path d="M181.6 544.2 L176.6 548.6 L181.6 553" stroke="#505050" stroke-width="2" fill="none"/>
<path d="M1843.8 544.2 L1848.8 548.6 L1843.8 553" stroke="#505050" stroke-width="2" fill="none"/>
<rect x="5" y="558" width="1876" height="30" fill="#f0f0f0" />
<rect x="9.5" y="561.5" width="21.5" height="21" fill="#c2c2c2" stroke="#0078d7" stroke-width="1" />
<rect x="11.5" y="564.5" width="3.6" height="9.5" fill="#e05a5a" opacity="0.9"/>
<rect x="16.4" y="568.5" width="3.6" height="4.5" fill="#e05a5a" opacity="0.9"/>
<rect x="21.4" y="566" width="3.6" height="6.5" fill="#e05a5a" opacity="0.9"/>
<rect x="26.4" y="571" width="3.3" height="3.5" fill="#e05a5a" opacity="0.9"/>
<rect x="14.2" y="576" width="3.6" height="3.5" fill="#3c5ce6" />
<rect x="19.4" y="572" width="3.6" height="7.5" fill="#3c5ce6" />
<rect x="24.6" y="574.5" width="3.6" height="5" fill="#3c5ce6" />
<rect x="35.5" y="565" width="19.5" height="15.5" fill="#ffffff" stroke="#6a6488" stroke-width="1.2" />
<rect x="36.1" y="565.6" width="18.3" height="3.275" fill="#a4e27a" />
<rect x="36.1" y="565.6" width="3.9000000000000004" height="14.3" fill="#a4e27a" />
<path d="M35.5 568.88 H55.0" stroke="#6a6488" stroke-width="1.1"/>
<path d="M35.5 572.75 H55.0" stroke="#6a6488" stroke-width="1.1"/>
<path d="M35.5 576.62 H55.0" stroke="#6a6488" stroke-width="1.1"/>
<path d="M39.40 565 V580.5" stroke="#6a6488" stroke-width="1.1"/>
<path d="M47.20 565 V580.5" stroke="#6a6488" stroke-width="1.1"/>
<rect x="43.5" y="574" width="12" height="8.5" fill="#f0f0f0" />
<rect x="44.3" y="578.2" width="2.6" height="3.5" fill="#3c5ce6" />
<rect x="48" y="575" width="2.6" height="6.7" fill="#3c5ce6" />
<rect x="51.8" y="576.8" width="2.6" height="4.9" fill="#3c5ce6" />
<rect x="63.5" y="563.5" width="14" height="17" fill="#ffffff" stroke="#5b8fd0" stroke-width="1.3" />
<circle cx="70.5" cy="570.6" r="4.2" fill="#fff" stroke="#3d5f96" stroke-width="1.2"/>
<path d="M70.5 568 V570.8 H72.8" stroke="#3d5f96" stroke-width="1.1" fill="none"/>
<path d="M66 577.6 H75" stroke="#3d5f96" stroke-width="1.1"/>
<path d="M88.5 563.5 H97.5 L102.5 568.5 V580.5 H88.5 Z" fill="#fff" stroke="#5b8fd0" stroke-width="1.3"/>
<path d="M97.5 563.5 V568.5 H102.5" fill="#e4eefb" stroke="#5b8fd0" stroke-width="1.1"/>
<path d="M94.3 575.2 L98 580.6 L104.4 563.6" fill="none" stroke="#1f9a2f" stroke-width="2.1" stroke-linejoin="miter"/>
<rect x="113.5" y="563.5" width="14" height="17" fill="#ffffff" stroke="#5b8fd0" stroke-width="1.3" />
<path d="M116.8 568.5 H124.6" stroke="#4a7cc4" stroke-width="1.1"/>
<path d="M116.8 572.2 H124.6" stroke="#4a7cc4" stroke-width="1.1"/>
<path d="M116.8 576 H124.6" stroke="#4a7cc4" stroke-width="1.1"/>
<rect x="1628" y="561.2" width="20" height="19.6" fill="#c0c0c0" />
<path d="M1632.2 562.4 V577.4 L1635.8 574.2 L1638.6 580.2 L1641.2 579 L1638.4 573.2 L1643.6 573.2 Z" fill="#cdcdcd" stroke="#3c3c3c" stroke-width="1.4" stroke-linejoin="miter"/>
<circle cx="1657.8" cy="569.8" r="5.7" fill="#f4f4f4" stroke="#3a3a3a" stroke-width="1.7"/>
<path d="M1654.2 569.8 H1661.4 M1657.8 566.2 V573.4" stroke="#2c2c2c" stroke-width="2.2"/>
<path d="M1662.2 574.2 L1668 579.8" stroke="#3a3a3a" stroke-width="2.7" stroke-linecap="round"/>
<path d="M1666.2 561.4 L1669 561.4 L1669 564 Z" fill="#303030"/>
<rect x="1674.2" y="569.6" width="12.6" height="2.2" fill="#404040" />
<rect x="1695.5" y="568.5" width="90" height="4.2" fill="#ffffff" stroke="#3c3c3c" stroke-width="1" />
<path d="M1783.4 564.4 H1791 V566.2 L1788.8 576.6 H1785.6 L1783.4 566.2 Z" fill="#c9c9c9" stroke="#4a4a4a" stroke-width="1"/>
<rect x="1783.4" y="564.2" width="7.6" height="1.8" fill="#3a3a3a" />
<rect x="1796.8" y="569.6" width="12.2" height="2.2" fill="#b6b6b6" />
<rect x="1801.8" y="564.6" width="2.2" height="12.2" fill="#b6b6b6" />
<rect x="1815.8" y="563.8" width="17.2" height="15.2" fill="#fbfbfb" stroke="#c6c6c6" stroke-width="1.2" />
<rect x="1816.4" y="564.3" width="15.999999999999998" height="2.3" fill="#d6d6d6" />
<rect x="1815.8" y="566.5" width="17.2" height="0.9" fill="#c6c6c6"/>
<rect x="1815.2" y="578.6" width="18.4" height="0.9" fill="#c6c6c6"/>
<path d="M1816.2 572.7 L1820.2 569.1 V576.3000000000001 Z M1832.8 572.7 L1829.0 569.1 V576.3000000000001 Z" fill="#bdbdbd"/>
<rect x="1821.8" y="569.1" width="5.6" height="7.2" fill="none" stroke="#bdbdbd" stroke-width="1" stroke-dasharray="1.5 1.7"/>
<rect x="1837.0" y="563.8" width="17.2" height="15.2" fill="#fbfbfb" stroke="#6e6e6e" stroke-width="1.2" />
<rect x="1837.6000000000001" y="564.3" width="15.999999999999998" height="2.3" fill="#9c9cc2" />
<rect x="1837.0" y="566.5" width="17.2" height="0.9" fill="#6e6e6e"/>
<rect x="1836.4" y="578.6" width="18.4" height="0.9" fill="#6e6e6e"/>
<path d="M1837.6000000000001 572.7 L1841.4 569.2 V576.2 Z M1854.0 572.7 L1850.2 569.2 V576.2 Z" fill="#2c2c2c"/>
<path d="M1842.8000000000002 572.7 H1844.6000000000001 M1846.8000000000002 572.7 H1848.8000000000002" stroke="#2c2c2c" stroke-width="1.6"/>
<rect x="1858.3" y="563.8" width="17.2" height="15.2" fill="#fbfbfb" stroke="#6e6e6e" stroke-width="1.2" />
<rect x="1858.9" y="564.3" width="15.999999999999998" height="2.3" fill="#9c9cc2" />
<rect x="1858.3" y="566.5" width="17.2" height="0.9" fill="#6e6e6e"/>
<rect x="1857.7" y="578.6" width="18.4" height="0.9" fill="#6e6e6e"/>
<path d="M1860.9 571.5 L1863.1000000000001 569.3000000000001 H1864.1000000000001 V576.7 H1862.5 V571.7 L1860.9 572.5 Z" fill="#2c2c2c"/>
<path d="M1868.5 571.5 L1870.7 569.3000000000001 H1871.7 V576.7 H1870.1 V571.7 L1868.5 572.5 Z" fill="#2c2c2c"/>
<path d="M1865.0 572.5 H1867.4 M1865.0 575.0 H1867.4" stroke="#9a9a9a" stroke-width="0.9"/>
<rect x="2" y="594" width="1" height="214" fill="#fafafa" />
<rect x="3" y="594" width="1878" height="1" fill="#707070" />
<rect x="3" y="594" width="1" height="214" fill="#707070" />
<rect x="4" y="595" width="1" height="213" fill="#b8b8b8" />
<rect x="5" y="595" width="1876" height="1" fill="#fbfbfb" />
<rect x="5" y="596" width="202" height="1" fill="#d2d2d2" />
<rect x="206" y="621" width="1675" height="1" fill="#a9a9a9" />
<rect x="206" y="596" width="1" height="26" fill="#a9a9a9" />
<rect x="14.6" y="601.6" width="18.6" height="14.8" fill="#ffffff" stroke="#6a6488" stroke-width="1.2" />
<rect x="15.2" y="602.2" width="17.400000000000002" height="3.1" fill="#a4e27a" />
<rect x="15.2" y="602.2" width="3.7200000000000006" height="13.600000000000001" fill="#a4e27a" />
<path d="M14.6 605.30 H33.2" stroke="#6a6488" stroke-width="1.1"/>
<path d="M14.6 609.00 H33.2" stroke="#6a6488" stroke-width="1.1"/>
<path d="M14.6 612.70 H33.2" stroke="#6a6488" stroke-width="1.1"/>
<path d="M18.32 601.6 V616.4" stroke="#6a6488" stroke-width="1.1"/>
<path d="M25.76 601.6 V616.4" stroke="#6a6488" stroke-width="1.1"/>
<text x="39.5" y="615" font-size="13" fill="#000" textLength="138" lengthAdjust="spacing" >Indels-Indirect_evidence</text>
<path d="M185.8 605 L194.4 613.4 M194.4 605 L185.8 613.4" stroke="#6a6a6a" stroke-width="2" fill="none"/>
<rect x="6" y="627" width="1870" height="2.2" fill="#6f727a" />
<rect x="6" y="627" width="1" height="36" fill="#707070" />
<rect x="7" y="629" width="1" height="33" fill="#fcfcfc" />
<rect x="8" y="629" width="1" height="33" fill="#8a8d95" />
<rect x="8" y="662" width="1868" height="1" fill="#8a8d95" />
<rect x="7" y="663" width="1870" height="1" fill="#fafafa" />
<rect x="1875" y="629" width="1" height="34" fill="#8a8d95" />
<rect x="1876" y="627" width="1" height="37" fill="#fafafa" />
<text x="37.8" y="650.3" font-size="13" fill="#000" textLength="46.7" lengthAdjust="spacing" >Rows: 7</text>
<rect x="1417.5" y="634.5" width="149" height="23.5" fill="#e1e1e1" stroke="#adadad" stroke-width="1" />
<text x="1436.8" y="650.6" font-size="13" fill="#000" textLength="110.2" lengthAdjust="spacing" >Filter to Selection...</text>
<rect x="1571.5" y="634.5" width="207.5" height="23.5" fill="#ffffff" stroke="#9a9aa2" stroke-width="1" />
<rect x="1572.5" y="635.5" width="205.5" height="21.5" fill="none" stroke="#dcdce0" stroke-width="1" />
<rect x="1784.5" y="634.5" width="66.5" height="23.5" fill="#e1e1e1" stroke="#adadad" stroke-width="1" />
<text x="1803" y="650.6" font-size="13" fill="#000" textLength="28.3" lengthAdjust="spacing" >Filter</text>
<rect x="1856.6" y="641" width="15.3" height="2.1" fill="#ffffff" />
<rect x="1856.9" y="639.4" width="14.7" height="1.6" fill="#585858" />
<rect x="1856.9" y="643.1" width="14.7" height="1.6" fill="#585858" />
<path d="M1859.2 646.9 H1869.2 L1864.2 652.2 Z" fill="#505050"/>
<rect x="9" y="670" width="1866" height="132" fill="#ffffff" />
<rect x="6" y="668" width="1870" height="2.7" fill="#6f727a" />
<rect x="6" y="668" width="1" height="135" fill="#707070" />
<rect x="7" y="670" width="1" height="132" fill="#fcfcfc" />
<rect x="8" y="670" width="1" height="132" fill="#8a8d95" />
<rect x="8" y="802" width="1868" height="1" fill="#8a8d95" />
<rect x="7" y="803" width="1870" height="1" fill="#fafafa" />
<rect x="1875" y="670" width="1" height="133" fill="#8a8d95" />
<rect x="1876" y="668" width="1" height="136" fill="#fafafa" />
<rect x="9" y="670" width="1844" height="31" fill="#ffffff" />
<rect x="1853" y="670" width="22" height="32" fill="#f0f0f0" />
<rect x="9" y="700" width="1844" height="1" fill="#e8e8e8" />
<rect x="9" y="701" width="1844" height="1" fill="#f4f4f4" />
<text x="15.3" y="691" font-size="13" fill="#1a1a1a" transform="scale(0.97,1)" style="transform-origin:16px 0">Chromosome</text>
<text x="112.0" y="691" font-size="13" fill="#1a1a1a" transform="scale(0.97,1)" style="transform-origin:111px 0">Region</text>
<rect x="103.0" y="671" width="1" height="29" fill="#e4e4e4" />
<text x="266.0" y="691" font-size="13" fill="#1a1a1a" transform="scale(0.97,1)" style="transform-origin:265px 0">Type</text>
<rect x="257.2" y="671" width="1" height="29" fill="#e4e4e4" />
<text x="362.0" y="691" font-size="13" fill="#1a1a1a" transform="scale(0.97,1)" style="transform-origin:361px 0">Length</text>
<rect x="352.90000000000003" y="671" width="1" height="29" fill="#e4e4e4" />
<text x="458.0" y="691" font-size="13" fill="#1a1a1a" transform="scale(0.97,1)" style="transform-origin:457px 0">Count</text>
<rect x="449.2" y="671" width="1" height="29" fill="#e4e4e4" />
<text x="554.0" y="691" font-size="13" fill="#1a1a1a" transform="scale(0.97,1)" style="transform-origin:553px 0">Coverage</text>
<rect x="545.5" y="671" width="1" height="29" fill="#e4e4e4" />
<text x="650.5" y="691" font-size="13" fill="#1a1a1a" transform="scale(0.97,1)" style="transform-origin:649.5px 0">Frequency</text>
<rect x="641.9" y="671" width="1" height="29" fill="#e4e4e4" />
<text x="747.0" y="691" font-size="13" fill="#1a1a1a" transform="scale(0.97,1)" style="transform-origin:746px 0">Forward re...</text>
<rect x="738.0" y="671" width="1" height="29" fill="#e4e4e4" />
<text x="843.0" y="691" font-size="13" fill="#1a1a1a" transform="scale(0.97,1)" style="transform-origin:842px 0">Reverse rea...</text>
<rect x="833.9" y="671" width="1" height="29" fill="#e4e4e4" />
<text x="939.0" y="691" font-size="13" fill="#1a1a1a" transform="scale(0.97,1)" style="transform-origin:938px 0">Forward/re...</text>
<rect x="930.1999999999999" y="671" width="1" height="29" fill="#e4e4e4" />
<text x="1035.5" y="691" font-size="13" fill="#1a1a1a" transform="scale(0.97,1)" style="transform-origin:1034.5px 0">Average qu...</text>
<rect x="1026.8" y="671" width="1" height="29" fill="#e4e4e4" />
<text x="1132.5" y="691" font-size="13" fill="#1a1a1a" transform="scale(0.97,1)" style="transform-origin:1131.5px 0">Score</text>
<rect x="1123.5" y="671" width="1" height="29" fill="#e4e4e4" />
<text x="1229.0" y="691" font-size="13" fill="#1a1a1a" transform="scale(0.97,1)" style="transform-origin:1228px 0">Subtype</text>
<rect x="1220.5" y="671" width="1" height="29" fill="#e4e4e4" />
<text x="1327.0" y="691" font-size="13" fill="#1a1a1a" transform="scale(0.97,1)" style="transform-origin:1326px 0">Complexity</text>
<rect x="1317.8999999999999" y="671" width="1" height="29" fill="#e4e4e4" />
<text x="1423.0" y="691" font-size="13" fill="#1a1a1a" transform="scale(0.97,1)" style="transform-origin:1422px 0">Evidence</text>
<rect x="1414.0" y="671" width="1" height="29" fill="#e4e4e4" />
<text x="1561.5" y="691" font-size="13" fill="#1a1a1a" transform="scale(0.97,1)" style="transform-origin:1560.5px 0">Left breakpoint</text>
<rect x="1552.8999999999999" y="671" width="1" height="29" fill="#e4e4e4" />
<text x="1706.0" y="691" font-size="13" fill="#1a1a1a" transform="scale(0.97,1)" style="transform-origin:1705px 0">Right breakpoint</text>
<rect x="1696.8999999999999" y="671" width="1" height="29" fill="#e4e4e4" />
<rect x="1852" y="671" width="1" height="29" fill="#e6e6e6" />
<rect x="9" y="701.8" width="1844" height="20" fill="#ffffff" />
<text x="12.6" y="716.8" font-size="13" fill="#000000" transform="scale(0.975,1)" style="transform-origin:13px 0">17</text>
<rect x="103.7" y="701.8" width="1" height="20" fill="#cbcbcb" />
<text x="108" y="716.8" font-size="13" fill="#000000" transform="scale(0.975,1)" style="transform-origin:108px 0">263235..263294</text>
<rect x="257.9" y="701.8" width="1" height="20" fill="#cbcbcb" />
<text x="262" y="716.8" font-size="13" fill="#000000" transform="scale(0.975,1)" style="transform-origin:262px 0">Deletion</text>
<rect x="353.6" y="701.8" width="1" height="20" fill="#cbcbcb" />
<text x="447" y="716.8" font-size="13" fill="#000000" text-anchor="end" transform="scale(0.975,1)" style="transform-origin:447px 0">60</text>
<rect x="449.9" y="701.8" width="1" height="20" fill="#cbcbcb" />
<text x="543" y="716.8" font-size="13" fill="#000000" text-anchor="end" transform="scale(0.975,1)" style="transform-origin:543px 0">575</text>
<rect x="546.2" y="701.8" width="1" height="20" fill="#cbcbcb" />
<text x="639.5" y="716.8" font-size="13" fill="#000000" text-anchor="end" transform="scale(0.975,1)" style="transform-origin:639.5px 0">1197</text>
<rect x="642.6" y="701.8" width="1" height="20" fill="#cbcbcb" />
<text x="736" y="716.8" font-size="13" fill="#000000" text-anchor="end" transform="scale(0.975,1)" style="transform-origin:736px 0">48.04</text>
<rect x="738.7" y="701.8" width="1" height="20" fill="#cbcbcb" />
<text x="832" y="716.8" font-size="13" fill="#000000" text-anchor="end" transform="scale(0.975,1)" style="transform-origin:832px 0">434</text>
<rect x="834.6" y="701.8" width="1" height="20" fill="#cbcbcb" />
<text x="928" y="716.8" font-size="13" fill="#000000" text-anchor="end" transform="scale(0.975,1)" style="transform-origin:928px 0">141</text>
<rect x="930.9" y="701.8" width="1" height="20" fill="#cbcbcb" />
<text x="1024.5" y="716.8" font-size="13" fill="#000000" text-anchor="end" transform="scale(0.975,1)" style="transform-origin:1024.5px 0">0.25</text>
<rect x="1027.5" y="701.8" width="1" height="20" fill="#cbcbcb" />
<text x="1121.5" y="716.8" font-size="13" fill="#000000" text-anchor="end" transform="scale(0.975,1)" style="transform-origin:1121.5px 0">39.49</text>
<rect x="1124.2" y="701.8" width="1" height="20" fill="#cbcbcb" />
<text x="1218" y="716.8" font-size="13" fill="#000000" text-anchor="end" transform="scale(0.975,1)" style="transform-origin:1218px 0">60</text>
<rect x="1221.2" y="701.8" width="1" height="20" fill="#cbcbcb" />
<text x="1225" y="716.8" font-size="13" fill="#000000" transform="scale(0.975,1)" style="transform-origin:1225px 0">Deletion</text>
<rect x="1318.6" y="701.8" width="1" height="20" fill="#cbcbcb" />
<text x="1412" y="716.8" font-size="13" fill="#000000" text-anchor="end" transform="scale(0.975,1)" style="transform-origin:1412px 0">16</text>
<rect x="1414.7" y="701.8" width="1" height="20" fill="#cbcbcb" />
<text x="1419" y="716.8" font-size="13" fill="#000000" transform="scale(0.975,1)" style="transform-origin:1419px 0">Paired Breakpoints</text>
<rect x="1553.6" y="701.8" width="1" height="20" fill="#cbcbcb" />
<text x="1557.5" y="716.8" font-size="13" fill="#000000" transform="scale(0.975,1)" style="transform-origin:1557.5px 0">263282^263283</text>
<rect x="1697.6" y="701.8" width="1" height="20" fill="#cbcbcb" />
<text x="1702" y="716.8" font-size="13" fill="#000000" transform="scale(0.975,1)" style="transform-origin:1702px 0">263293^263294</text>
<rect x="9" y="721.8" width="1844" height="20" fill="#f0f0f0" />
<text x="12.6" y="736.8" font-size="13" fill="#000000" transform="scale(0.975,1)" style="transform-origin:13px 0">19</text>
<rect x="103.7" y="721.8" width="1" height="20" fill="#cbcbcb" />
<text x="108" y="736.8" font-size="13" fill="#000000" transform="scale(0.975,1)" style="transform-origin:108px 0">10305514..10305602</text>
<rect x="257.9" y="721.8" width="1" height="20" fill="#cbcbcb" />
<text x="262" y="736.8" font-size="13" fill="#000000" transform="scale(0.975,1)" style="transform-origin:262px 0">Deletion</text>
<rect x="353.6" y="721.8" width="1" height="20" fill="#cbcbcb" />
<text x="447" y="736.8" font-size="13" fill="#000000" text-anchor="end" transform="scale(0.975,1)" style="transform-origin:447px 0">89</text>
<rect x="449.9" y="721.8" width="1" height="20" fill="#cbcbcb" />
<text x="543" y="736.8" font-size="13" fill="#000000" text-anchor="end" transform="scale(0.975,1)" style="transform-origin:543px 0">33</text>
<rect x="546.2" y="721.8" width="1" height="20" fill="#cbcbcb" />
<text x="639.5" y="736.8" font-size="13" fill="#000000" text-anchor="end" transform="scale(0.975,1)" style="transform-origin:639.5px 0">1952</text>
<rect x="642.6" y="721.8" width="1" height="20" fill="#cbcbcb" />
<text x="736" y="736.8" font-size="13" fill="#000000" text-anchor="end" transform="scale(0.975,1)" style="transform-origin:736px 0">1.69</text>
<rect x="738.7" y="721.8" width="1" height="20" fill="#cbcbcb" />
<text x="832" y="736.8" font-size="13" fill="#000000" text-anchor="end" transform="scale(0.975,1)" style="transform-origin:832px 0">3</text>
<rect x="834.6" y="721.8" width="1" height="20" fill="#cbcbcb" />
<text x="928" y="736.8" font-size="13" fill="#000000" text-anchor="end" transform="scale(0.975,1)" style="transform-origin:928px 0">30</text>
<rect x="930.9" y="721.8" width="1" height="20" fill="#cbcbcb" />
<text x="1024.5" y="736.8" font-size="13" fill="#000000" text-anchor="end" transform="scale(0.975,1)" style="transform-origin:1024.5px 0">0.09</text>
<rect x="1027.5" y="721.8" width="1" height="20" fill="#cbcbcb" />
<text x="1121.5" y="736.8" font-size="13" fill="#000000" text-anchor="end" transform="scale(0.975,1)" style="transform-origin:1121.5px 0">35.68</text>
<rect x="1124.2" y="721.8" width="1" height="20" fill="#cbcbcb" />
<text x="1218" y="736.8" font-size="13" fill="#000000" text-anchor="end" transform="scale(0.975,1)" style="transform-origin:1218px 0">58</text>
<rect x="1221.2" y="721.8" width="1" height="20" fill="#cbcbcb" />
<text x="1225" y="736.8" font-size="13" fill="#000000" transform="scale(0.975,1)" style="transform-origin:1225px 0">Deletion</text>
<rect x="1318.6" y="721.8" width="1" height="20" fill="#cbcbcb" />
<text x="1412" y="736.8" font-size="13" fill="#000000" text-anchor="end" transform="scale(0.975,1)" style="transform-origin:1412px 0">23</text>
<rect x="1414.7" y="721.8" width="1" height="20" fill="#cbcbcb" />
<text x="1419" y="736.8" font-size="13" fill="#000000" transform="scale(0.975,1)" style="transform-origin:1419px 0">Single Breakpoint</text>
<rect x="1553.6" y="721.8" width="1" height="20" fill="#cbcbcb" />
<rect x="1697.6" y="721.8" width="1" height="20" fill="#cbcbcb" />
<text x="1702" y="736.8" font-size="13" fill="#000000" transform="scale(0.975,1)" style="transform-origin:1702px 0">10305602^10305603</text>
<rect x="9" y="741.8" width="1844" height="20" fill="#c0c0c0" />
<text x="12.6" y="756.8" font-size="13" fill="#f2f2f2" transform="scale(0.975,1)" style="transform-origin:13px 0">19</text>
<rect x="103.7" y="741.8" width="1" height="20" fill="#cbcbcb" />
<rect x="103.7" y="741.8" width="1" height="20" fill="#d2d2d2" />
<text x="108" y="756.8" font-size="13" fill="#f2f2f2" transform="scale(0.975,1)" style="transform-origin:108px 0">13054562..13054613</text>
<rect x="257.9" y="741.8" width="1" height="20" fill="#cbcbcb" />
<rect x="257.9" y="741.8" width="1" height="20" fill="#d2d2d2" />
<text x="262" y="756.8" font-size="13" fill="#f2f2f2" transform="scale(0.975,1)" style="transform-origin:262px 0">Deletion</text>
<rect x="353.6" y="741.8" width="1" height="20" fill="#cbcbcb" />
<rect x="353.6" y="741.8" width="1" height="20" fill="#d2d2d2" />
<text x="447" y="756.8" font-size="13" fill="#f2f2f2" text-anchor="end" transform="scale(0.975,1)" style="transform-origin:447px 0">52</text>
<rect x="449.9" y="741.8" width="1" height="20" fill="#cbcbcb" />
<rect x="449.9" y="741.8" width="1" height="20" fill="#d2d2d2" />
<text x="543" y="756.8" font-size="13" fill="#f2f2f2" text-anchor="end" transform="scale(0.975,1)" style="transform-origin:543px 0">357</text>
<rect x="546.2" y="741.8" width="1" height="20" fill="#cbcbcb" />
<rect x="546.2" y="741.8" width="1" height="20" fill="#d2d2d2" />
<text x="639.5" y="756.8" font-size="13" fill="#f2f2f2" text-anchor="end" transform="scale(0.975,1)" style="transform-origin:639.5px 0">1570</text>
<rect x="642.6" y="741.8" width="1" height="20" fill="#cbcbcb" />
<rect x="642.6" y="741.8" width="1" height="20" fill="#d2d2d2" />
<text x="736" y="756.8" font-size="13" fill="#f2f2f2" text-anchor="end" transform="scale(0.975,1)" style="transform-origin:736px 0">22.74</text>
<rect x="738.7" y="741.8" width="1" height="20" fill="#cbcbcb" />
<rect x="738.7" y="741.8" width="1" height="20" fill="#d2d2d2" />
<text x="832" y="756.8" font-size="13" fill="#f2f2f2" text-anchor="end" transform="scale(0.975,1)" style="transform-origin:832px 0">194</text>
<rect x="834.6" y="741.8" width="1" height="20" fill="#cbcbcb" />
<rect x="834.6" y="741.8" width="1" height="20" fill="#d2d2d2" />
<text x="928" y="756.8" font-size="13" fill="#f2f2f2" text-anchor="end" transform="scale(0.975,1)" style="transform-origin:928px 0">163</text>
<rect x="930.9" y="741.8" width="1" height="20" fill="#cbcbcb" />
<rect x="930.9" y="741.8" width="1" height="20" fill="#d2d2d2" />
<text x="1024.5" y="756.8" font-size="13" fill="#f2f2f2" text-anchor="end" transform="scale(0.975,1)" style="transform-origin:1024.5px 0">0.46</text>
<rect x="1027.5" y="741.8" width="1" height="20" fill="#cbcbcb" />
<rect x="1027.5" y="741.8" width="1" height="20" fill="#d2d2d2" />
<text x="1121.5" y="756.8" font-size="13" fill="#f2f2f2" text-anchor="end" transform="scale(0.975,1)" style="transform-origin:1121.5px 0">49.05</text>
<rect x="1124.2" y="741.8" width="1" height="20" fill="#cbcbcb" />
<rect x="1124.2" y="741.8" width="1" height="20" fill="#d2d2d2" />
<text x="1218" y="756.8" font-size="13" fill="#f2f2f2" text-anchor="end" transform="scale(0.975,1)" style="transform-origin:1218px 0">97</text>
<rect x="1221.2" y="741.8" width="1" height="20" fill="#cbcbcb" />
<rect x="1221.2" y="741.8" width="1" height="20" fill="#d2d2d2" />
<text x="1225" y="756.8" font-size="13" fill="#f2f2f2" transform="scale(0.975,1)" style="transform-origin:1225px 0">Deletion</text>
<rect x="1318.6" y="741.8" width="1" height="20" fill="#cbcbcb" />
<rect x="1318.6" y="741.8" width="1" height="20" fill="#d2d2d2" />
<text x="1412" y="756.8" font-size="13" fill="#f2f2f2" text-anchor="end" transform="scale(0.975,1)" style="transform-origin:1412px 0">44</text>
<rect x="1414.7" y="741.8" width="1" height="20" fill="#cbcbcb" />
<rect x="1414.7" y="741.8" width="1" height="20" fill="#d2d2d2" />
<text x="1419" y="756.8" font-size="13" fill="#f2f2f2" transform="scale(0.975,1)" style="transform-origin:1419px 0">Paired Breakpoints</text>
<rect x="1553.6" y="741.8" width="1" height="20" fill="#cbcbcb" />
<rect x="1553.6" y="741.8" width="1" height="20" fill="#d2d2d2" />
<text x="1557.5" y="756.8" font-size="13" fill="#f2f2f2" transform="scale(0.975,1)" style="transform-origin:1557.5px 0">13054562^13054563</text>
<rect x="1697.6" y="741.8" width="1" height="20" fill="#cbcbcb" />
<rect x="1697.6" y="741.8" width="1" height="20" fill="#d2d2d2" />
<text x="1702" y="756.8" font-size="13" fill="#f2f2f2" transform="scale(0.975,1)" style="transform-origin:1702px 0">13054613^13054614</text>
<rect x="9" y="761.8" width="1844" height="20" fill="#f0f0f0" />
<text x="12.6" y="776.8" font-size="13" fill="#000000" transform="scale(0.975,1)" style="transform-origin:13px 0">20</text>
<rect x="103.7" y="761.8" width="1" height="20" fill="#cbcbcb" />
<text x="108" y="776.8" font-size="13" fill="#000000" transform="scale(0.975,1)" style="transform-origin:108px 0">57429512..57429628</text>
<rect x="257.9" y="761.8" width="1" height="20" fill="#cbcbcb" />
<text x="262" y="776.8" font-size="13" fill="#000000" transform="scale(0.975,1)" style="transform-origin:262px 0">Deletion</text>
<rect x="353.6" y="761.8" width="1" height="20" fill="#cbcbcb" />
<text x="447" y="776.8" font-size="13" fill="#000000" text-anchor="end" transform="scale(0.975,1)" style="transform-origin:447px 0">117</text>
<rect x="449.9" y="761.8" width="1" height="20" fill="#cbcbcb" />
<text x="543" y="776.8" font-size="13" fill="#000000" text-anchor="end" transform="scale(0.975,1)" style="transform-origin:543px 0">93</text>
<rect x="546.2" y="761.8" width="1" height="20" fill="#cbcbcb" />
<text x="639.5" y="776.8" font-size="13" fill="#000000" text-anchor="end" transform="scale(0.975,1)" style="transform-origin:639.5px 0">2262</text>
<rect x="642.6" y="761.8" width="1" height="20" fill="#cbcbcb" />
<text x="736" y="776.8" font-size="13" fill="#000000" text-anchor="end" transform="scale(0.975,1)" style="transform-origin:736px 0">4.11</text>
<rect x="738.7" y="761.8" width="1" height="20" fill="#cbcbcb" />
<text x="832" y="776.8" font-size="13" fill="#000000" text-anchor="end" transform="scale(0.975,1)" style="transform-origin:832px 0">49</text>
<rect x="834.6" y="761.8" width="1" height="20" fill="#cbcbcb" />
<text x="928" y="776.8" font-size="13" fill="#000000" text-anchor="end" transform="scale(0.975,1)" style="transform-origin:928px 0">44</text>
<rect x="930.9" y="761.8" width="1" height="20" fill="#cbcbcb" />
<text x="1024.5" y="776.8" font-size="13" fill="#000000" text-anchor="end" transform="scale(0.975,1)" style="transform-origin:1024.5px 0">0.47</text>
<rect x="1027.5" y="761.8" width="1" height="20" fill="#cbcbcb" />
<text x="1121.5" y="776.8" font-size="13" fill="#000000" text-anchor="end" transform="scale(0.975,1)" style="transform-origin:1121.5px 0">40.15</text>
<rect x="1124.2" y="761.8" width="1" height="20" fill="#cbcbcb" />
<text x="1218" y="776.8" font-size="13" fill="#000000" text-anchor="end" transform="scale(0.975,1)" style="transform-origin:1218px 0">117</text>
<rect x="1221.2" y="761.8" width="1" height="20" fill="#cbcbcb" />
<text x="1225" y="776.8" font-size="13" fill="#000000" transform="scale(0.975,1)" style="transform-origin:1225px 0">Deletion</text>
<rect x="1318.6" y="761.8" width="1" height="20" fill="#cbcbcb" />
<text x="1412" y="776.8" font-size="13" fill="#000000" text-anchor="end" transform="scale(0.975,1)" style="transform-origin:1412px 0">15</text>
<rect x="1414.7" y="761.8" width="1" height="20" fill="#cbcbcb" />
<text x="1419" y="776.8" font-size="13" fill="#000000" transform="scale(0.975,1)" style="transform-origin:1419px 0">Paired Breakpoints</text>
<rect x="1553.6" y="761.8" width="1" height="20" fill="#cbcbcb" />
<text x="1557.5" y="776.8" font-size="13" fill="#000000" transform="scale(0.975,1)" style="transform-origin:1557.5px 0">57429525^57429526</text>
<rect x="1697.6" y="761.8" width="1" height="20" fill="#cbcbcb" />
<text x="1702" y="776.8" font-size="13" fill="#000000" transform="scale(0.975,1)" style="transform-origin:1702px 0">57429630^57429631</text>
<rect x="9" y="781.8" width="1844" height="20" fill="#ffffff" />
<text x="12.6" y="796.8" font-size="13" fill="#000000" transform="scale(0.975,1)" style="transform-origin:13px 0">22</text>
<rect x="103.7" y="781.8" width="1" height="20" fill="#cbcbcb" />
<text x="108" y="796.8" font-size="13" fill="#000000" transform="scale(0.975,1)" style="transform-origin:108px 0">41548320^41548321</text>
<rect x="257.9" y="781.8" width="1" height="20" fill="#cbcbcb" />
<text x="262" y="796.8" font-size="13" fill="#000000" transform="scale(0.975,1)" style="transform-origin:262px 0">Insertion</text>
<rect x="353.6" y="781.8" width="1" height="20" fill="#cbcbcb" />
<text x="447" y="796.8" font-size="13" fill="#000000" text-anchor="end" transform="scale(0.975,1)" style="transform-origin:447px 0">34</text>
<rect x="449.9" y="781.8" width="1" height="20" fill="#cbcbcb" />
<text x="543" y="796.8" font-size="13" fill="#000000" text-anchor="end" transform="scale(0.975,1)" style="transform-origin:543px 0">24</text>
<rect x="546.2" y="781.8" width="1" height="20" fill="#cbcbcb" />
<text x="639.5" y="796.8" font-size="13" fill="#000000" text-anchor="end" transform="scale(0.975,1)" style="transform-origin:639.5px 0">180</text>
<rect x="642.6" y="781.8" width="1" height="20" fill="#cbcbcb" />
<text x="736" y="796.8" font-size="13" fill="#000000" text-anchor="end" transform="scale(0.975,1)" style="transform-origin:736px 0">13.33</text>
<rect x="738.7" y="781.8" width="1" height="20" fill="#cbcbcb" />
<text x="832" y="796.8" font-size="13" fill="#000000" text-anchor="end" transform="scale(0.975,1)" style="transform-origin:832px 0">24</text>
<rect x="834.6" y="781.8" width="1" height="20" fill="#cbcbcb" />
<text x="928" y="796.8" font-size="13" fill="#000000" text-anchor="end" transform="scale(0.975,1)" style="transform-origin:928px 0">0</text>
<rect x="930.9" y="781.8" width="1" height="20" fill="#cbcbcb" />
<text x="1024.5" y="796.8" font-size="13" fill="#000000" text-anchor="end" transform="scale(0.975,1)" style="transform-origin:1024.5px 0">0.00</text>
<rect x="1027.5" y="781.8" width="1" height="20" fill="#cbcbcb" />
<text x="1121.5" y="796.8" font-size="13" fill="#000000" text-anchor="end" transform="scale(0.975,1)" style="transform-origin:1121.5px 0">43.95</text>
<rect x="1124.2" y="781.8" width="1" height="20" fill="#cbcbcb" />
<text x="1218" y="796.8" font-size="13" fill="#000000" text-anchor="end" transform="scale(0.975,1)" style="transform-origin:1218px 0">34</text>
<rect x="1221.2" y="781.8" width="1" height="20" fill="#cbcbcb" />
<text x="1225" y="796.8" font-size="13" fill="#000000" transform="scale(0.975,1)" style="transform-origin:1225px 0">Insertion</text>
<rect x="1318.6" y="781.8" width="1" height="20" fill="#cbcbcb" />
<text x="1412" y="796.8" font-size="13" fill="#000000" text-anchor="end" transform="scale(0.975,1)" style="transform-origin:1412px 0">19</text>
<rect x="1414.7" y="781.8" width="1" height="20" fill="#cbcbcb" />
<text x="1419" y="796.8" font-size="13" fill="#000000" transform="scale(0.975,1)" style="transform-origin:1419px 0">Single Breakpoint</text>
<rect x="1553.6" y="781.8" width="1" height="20" fill="#cbcbcb" />
<text x="1557.5" y="796.8" font-size="13" fill="#000000" transform="scale(0.975,1)" style="transform-origin:1557.5px 0">41548320^41548321</text>
<rect x="1697.6" y="781.8" width="1" height="20" fill="#cbcbcb" />
<rect x="1853.4" y="701.7" width="1" height="100.3" fill="#e8e8e8" />
<rect x="1854.4" y="701.7" width="0.8" height="100.3" fill="#ffffff" />
<rect x="1855" y="701.7" width="20" height="100.3" fill="#f0f0f0" />
<rect x="1855.2" y="739" width="18.7" height="41.8" fill="#cdcdcd" />
<path d="M1860.6 715.4 L1865 710.8 L1869.4 715.4" stroke="#505050" stroke-width="2" fill="none"/>
<path d="M1860.6 789.4 L1865 794 L1869.4 789.4" stroke="#505050" stroke-width="2" fill="none"/>
</svg>
</body>
</html>
